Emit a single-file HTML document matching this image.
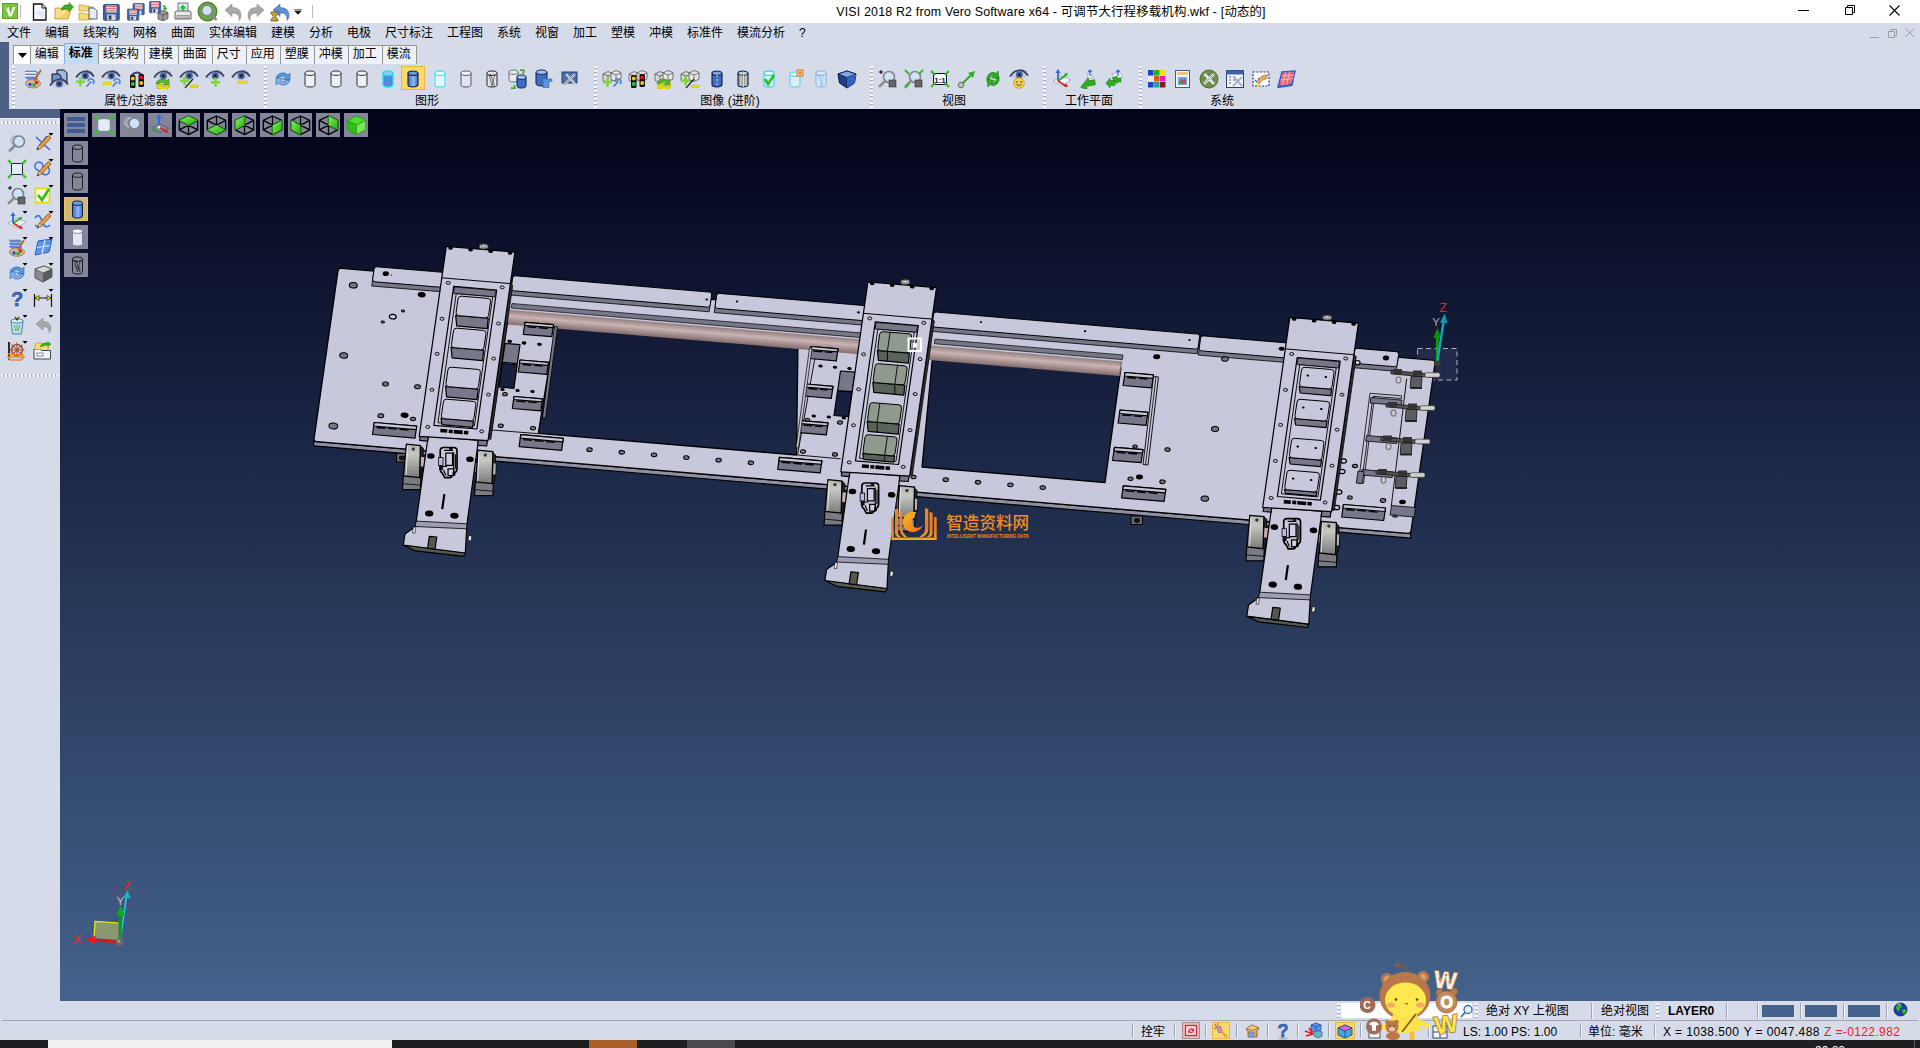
<!DOCTYPE html>
<html lang="zh-CN"><head><meta charset="utf-8"><title>VISI 2018 R2</title>
<style>
html,body{margin:0;padding:0}
body{width:1920px;height:1048px;position:relative;overflow:hidden;background:#d6dbe9;font-family:"Liberation Sans","Noto Sans CJK SC",sans-serif;font-size:12px;color:#000}
.a{position:absolute}
.t{position:absolute;white-space:nowrap;line-height:14px;font-size:12px}
#title{left:0;top:0;width:1920px;height:23px;background:#fff}
.tab{position:absolute;top:45px;height:19px;padding-right:1.5px;border:1px solid #9a978a;border-bottom:none;background:#ecf1fb;box-sizing:border-box;text-align:center;line-height:17px;font-size:12px}
.tab.sel{top:43px;height:21px;background:#c3dcf6;border-color:#8fb0d4;line-height:19px}
.grp{position:absolute;top:94px;height:14px;line-height:14px;font-size:12px;text-align:center;white-space:nowrap}
.sep{position:absolute;top:66px;width:3px;height:42px;background:repeating-linear-gradient(180deg,#f6f7fb 0 2px,#a9aebd 2px 3px,#d6dbe9 3px 4px)}
.vb{position:absolute;width:24px;height:24px;background:rgba(150,152,170,.86)}
.sb{position:absolute;top:1000px;}
</style></head>
<body>
<div class="a" id="title"></div>
<div class="t" style="left:836px;top:5px;width:430px;text-align:center;font-size:12.4px;letter-spacing:.18px">VISI 2018 R2 from Vero Software x64 - 可调节大行程移载机构.wkf - [动态的]</div>
<svg class="a" style="left:2px;top:3px" width="17" height="17" viewBox="0 0 17 17" ><rect width="16" height="16" rx="1" fill="#7cc242"/><rect x=".500" y=".500" width="15" height="15" fill="none" stroke="#5da52c"/><path d="M3.500 4h3l2 7 2.500-7h2.500l-4 9.500h-2.500z" fill="#fff"/><circle cx="5" cy="4.800" r="1" fill="#7cc242"/></svg>
<div class="a" style="left:20px;top:5px;width:1px;height:13px;background:#b9b9b9"></div>
<svg class="a" style="left:32px;top:3px" width="16" height="18" viewBox="0 0 16 18" ><path d="M1.500 1h8.500l4 4v12h-12.500z" fill="#f4f7ff" stroke="#111" stroke-width="1.300"/><path d="M10 1v4h4" fill="#dfe6f7" stroke="#111" stroke-width="1"/><path d="M3 9l9 7v-8z" fill="#d4defa" opacity=".7"/></svg>
<svg class="a" style="left:54px;top:2px" width="20" height="19" viewBox="0 0 20 19" ><path d="M1 17l2-10h14l-3 10z" fill="#f4d26a" stroke="#b98d1c" stroke-width=".8"/><path d="M1 17v-11h5l1.500 1.500h6v2" fill="#f8e08c" stroke="#b98d1c" stroke-width=".8"/><path d="M7 8q2-6 8-5v-2.500l4.500 4.500-4.500 4.500v-2.500q-4-1-8 1z" fill="#35b320" stroke="#1e7a10" stroke-width=".6"/></svg>
<svg class="a" style="left:78px;top:3px" width="20" height="18" viewBox="0 0 20 18" ><path d="M1 2h5l1 1h4v5h-10zM1 10h5l1 1h4v6h-10z" fill="#f6d978" stroke="#c09a30" stroke-width=".7"/><path d="M10 4h5v12h-4" fill="none" stroke="#5fd04a" stroke-width="1"/><path d="M11 5h5l3 3v8h-8z" fill="#e4ecff" stroke="#555" stroke-width=".9"/></svg>
<svg class="a" style="left:103px;top:4px" width="17" height="17" viewBox="0 0 17 17" ><g transform="translate(0.5 0.5) scale(1.05)"><rect x="0" y="0" width="15" height="15" rx="1" fill="#3f62a8" stroke="#22407c" stroke-width=".8"/><rect x="2.500" y="1" width="10" height="6.500" fill="#f2f2f2"/><path d="M2.500 2h10M2.500 4h10M2.500 6h10" stroke="#d85050" stroke-width=".9"/><rect x="3.500" y="9.500" width="8" height="5.500" fill="#cfd4dc"/><rect x="5" y="10.500" width="2.500" height="3.800" fill="#334"/></g></svg>
<svg class="a" style="left:127px;top:3px" width="19" height="18" viewBox="0 0 19 18" ><g transform="translate(6 0.5) scale(0.75)"><rect x="0" y="0" width="15" height="15" rx="1" fill="#3f62a8" stroke="#22407c" stroke-width=".8"/><rect x="2.500" y="1" width="10" height="6.500" fill="#f2f2f2"/><path d="M2.500 2h10M2.500 4h10M2.500 6h10" stroke="#d85050" stroke-width=".9"/><rect x="3.500" y="9.500" width="8" height="5.500" fill="#cfd4dc"/><rect x="5" y="10.500" width="2.500" height="3.800" fill="#334"/></g><g transform="translate(0.5 6) scale(0.75)"><rect x="0" y="0" width="15" height="15" rx="1" fill="#3f62a8" stroke="#22407c" stroke-width=".8"/><rect x="2.500" y="1" width="10" height="6.500" fill="#f2f2f2"/><path d="M2.500 2h10M2.500 4h10M2.500 6h10" stroke="#d85050" stroke-width=".9"/><rect x="3.500" y="9.500" width="8" height="5.500" fill="#cfd4dc"/><rect x="5" y="10.500" width="2.500" height="3.800" fill="#334"/></g></svg>
<svg class="a" style="left:149px;top:1px" width="20" height="20" viewBox="0 0 20 20" ><g transform="translate(0.5 0.5) scale(0.75)"><rect x="0" y="0" width="15" height="15" rx="1" fill="#3f62a8" stroke="#22407c" stroke-width=".8"/><rect x="2.500" y="1" width="10" height="6.500" fill="#f2f2f2"/><path d="M2.500 2h10M2.500 4h10M2.500 6h10" stroke="#d85050" stroke-width=".9"/><rect x="3.500" y="9.500" width="8" height="5.500" fill="#cfd4dc"/><rect x="5" y="10.500" width="2.500" height="3.800" fill="#334"/></g><path d="M14 4q3 0 3 3l1.500-.5-2 3.500-3-2.500 1.500-.3q0-1.500-1.500-1.700z" fill="#35b320"/><path d="M9 12l5-2.500 5 2v6l-5 2.500-5-2z" fill="#9a9a9a" stroke="#444" stroke-width=".7"/><path d="M9 12l5 2 5-2M14 14v6" fill="none" stroke="#444" stroke-width=".7"/></svg>
<svg class="a" style="left:174px;top:2px" width="19" height="19" viewBox="0 0 19 19" ><rect x="4" y="1" width="10" height="9" fill="#d8e8fb" stroke="#555" stroke-width=".8"/><path d="M9 2.500l3.500 4h-2.200v2h-2.600v-2h-2.200z" fill="#2dbb2d"/><path d="M1 11q0-2 2-2h12q2 0 2 2v6h-16z" fill="#e8e8e8" stroke="#555" stroke-width=".9"/><rect x="3" y="13.500" width="12" height="3" fill="#bdbdbd" stroke="#666" stroke-width=".5"/></svg>
<svg class="a" style="left:197px;top:1px" width="22" height="22" viewBox="0 0 22 22" ><circle cx="10.500" cy="10.500" r="9.300" fill="#6ea54a" stroke="#4f8434" stroke-width="1.400"/><circle cx="10" cy="9.5" r="5.3" fill="#cfe2f6" stroke="#7c8590" stroke-width="1.600"/><path d="M13.815999999999999 13.315999999999999l5.034999999999999 5.034999999999999" stroke="#8b8b8b" stroke-width="2.600" stroke-linecap="round"/></svg>
<svg class="a" style="left:223px;top:2px" width="20" height="20" viewBox="0 0 20 20" ><path d="M2 8l7-6v3.500q9 0 9 8q0 3-2 5q1-8-7-7.500v3.500z" fill="#a9a9a9" stroke="#8a8a8a" stroke-width=".6"/></svg>
<svg class="a" style="left:246px;top:2px" width="20" height="20" viewBox="0 0 20 20" ><path d="M18 8l-7-6v3.500q-9 0-9 8q0 3 2 5q-1-8 7-7.500v3.500z" fill="#a9a9a9" stroke="#8a8a8a" stroke-width=".6"/></svg>
<svg class="a" style="left:269px;top:1px" width="21" height="21" viewBox="0 0 21 21" ><path d="M4 9l7-6v3.500q9 0 9 8q0 3-2 5q1-8-7-7.500v3.500z" fill="#5b8fd8" stroke="#3767ae" stroke-width=".6"/><path d="M2 11h7v1.500l-2.500 3 2.500 3v1.500h-7v-1.500l2.500-3-2.500-3z" fill="#c9a24a" stroke="#6b4e12" stroke-width=".8"/></svg>
<svg class="a" style="left:294px;top:9px" width="9" height="6" viewBox="0 0 9 6" ><path d="M0 0h8M1 2.200h6l-3 3z" stroke="#000" stroke-width="1" fill="#000"/></svg>
<div class="a" style="left:312px;top:5px;width:1px;height:13px;background:#b9b9b9"></div>
<svg class="a" style="left:1790px;top:0px" width="130" height="23" viewBox="0 0 130 23" ><path d="M8 10.500h11" stroke="#000" stroke-width="1"/><path d="M55.500 7.500h7v7h-7zM57.500 7.500v-2h7v7h-2" fill="none" stroke="#000" stroke-width="1"/><path d="M99.500 5.500l10 10M109.500 5.500l-10 10" stroke="#000" stroke-width="1.100"/></svg>
<div class="t" style="left:7px;top:26px">文件</div>
<div class="t" style="left:45px;top:26px">编辑</div>
<div class="t" style="left:83px;top:26px">线架构</div>
<div class="t" style="left:133px;top:26px">网格</div>
<div class="t" style="left:171px;top:26px">曲面</div>
<div class="t" style="left:209px;top:26px">实体编辑</div>
<div class="t" style="left:271px;top:26px">建模</div>
<div class="t" style="left:309px;top:26px">分析</div>
<div class="t" style="left:347px;top:26px">电极</div>
<div class="t" style="left:385px;top:26px">尺寸标注</div>
<div class="t" style="left:447px;top:26px">工程图</div>
<div class="t" style="left:497px;top:26px">系统</div>
<div class="t" style="left:535px;top:26px">视窗</div>
<div class="t" style="left:573px;top:26px">加工</div>
<div class="t" style="left:611px;top:26px">塑模</div>
<div class="t" style="left:649px;top:26px">冲模</div>
<div class="t" style="left:687px;top:26px">标准件</div>
<div class="t" style="left:737px;top:26px">模流分析</div>
<div class="t" style="left:799px;top:26px">?</div>
<svg class="a" style="left:1866px;top:26px" width="54" height="14" viewBox="0 0 54 14" ><path d="M4 11.500h9" stroke="#9b9b9b" stroke-width="1"/><path d="M22.500 5.500h6v6h-6zM24.500 5.500v-2h6v6h-2" fill="none" stroke="#9b9b9b" stroke-width="1"/><path d="M39.500 2.500l8.500 8.500M48 2.500l-8.500 8.500" stroke="#9b9b9b" stroke-width="1"/></svg>
<div class="a" style="left:0;top:42px;width:9px;height:67px;background:#4d6183"></div>
<div class="tab" style="left:13px;width:18px;background:#fff"><svg width="9" height="5" style="position:absolute;left:4px;top:7px"><path d="M0 0H9L4.5 5Z" fill="#000"/></svg></div>
<div class="tab" style="left:30px;width:35px">编辑</div>
<div class="tab sel" style="left:64px;width:35px;font-weight:bold">标准</div>
<div class="tab" style="left:98px;width:47px">线架构</div>
<div class="tab" style="left:144px;width:35px">建模</div>
<div class="tab" style="left:178px;width:35px">曲面</div>
<div class="tab" style="left:212px;width:35px">尺寸</div>
<div class="tab" style="left:246px;width:35px">应用</div>
<div class="tab" style="left:280px;width:35px">塑膜</div>
<div class="tab" style="left:314px;width:35px">冲模</div>
<div class="tab" style="left:348px;width:35px">加工</div>
<div class="tab" style="left:382px;width:35px">模流</div>
<div class="a" style="left:9px;top:65px;width:1911px;height:44px;background:#d6dbe9"></div>
<div class="sep" style="left:12px"></div>
<div class="sep" style="left:264px"></div>
<div class="sep" style="left:594px"></div>
<div class="sep" style="left:870px"></div>
<div class="sep" style="left:1043px"></div>
<div class="sep" style="left:1139px"></div>
<div class="grp" style="left:76px;width:120px">属性/过滤器</div>
<div class="grp" style="left:367px;width:120px">图形</div>
<div class="grp" style="left:670px;width:120px">图像 (进阶)</div>
<div class="grp" style="left:894px;width:120px">视图</div>
<div class="grp" style="left:1029px;width:120px">工作平面</div>
<div class="grp" style="left:1162px;width:120px">系统</div>
<svg class="a" style="left:23px;top:69px" width="20" height="20" viewBox="0 0 20 20" ><path d="M2 2h11l2 2h-11zM2 5h11l2 2h-11zM2 8h11l2 2h-11z" fill="#6b8fe0" stroke="#3b5cae" stroke-width=".4"/><rect x="2" y="3" width="11" height="1.300" fill="#e8eefc"/><rect x="2" y="6" width="11" height="1.300" fill="#e8eefc"/><ellipse cx="10" cy="14.500" rx="7.500" ry="4.500" fill="#d9b48c" stroke="#8a6238" stroke-width=".7"/><circle cx="7" cy="15.500" r="1.700" fill="#2050e0"/><circle cx="11" cy="16" r="1.700" fill="#20b030"/><circle cx="13.500" cy="13.500" r="1.700" fill="#e02020"/><path d="M18 1l-7 11" stroke="#b06a28" stroke-width="1.800"/></svg>
<svg class="a" style="left:49px;top:69px" width="20" height="20" viewBox="0 0 20 20" ><path d="M8 1h7l3 3v10h-10z" fill="#9db8ea" stroke="#111" stroke-width="1"/><path d="M3 5h7l2 2v9h-9z" fill="#6f93d8" stroke="#111" stroke-width="1"/><g transform="translate(0 8)"><path d="M1 8.500Q5 2.500 11 2.500Q16 3 19 7.500Q14 11.500 9 11Q4 10.500 1 8.500Z" fill="#c3cbe2"/><path d="M1 8.500Q5 2 11 2.300Q16 2.800 19 7.500" fill="none" stroke="#39425f" stroke-width="1.700"/><circle cx="10.300" cy="6.800" r="3.500" fill="#46639c"/><circle cx="10.300" cy="6.800" r="1.500" fill="#17203a"/><path d="M12 .8l1 1.800M14.500 1.500l.6 1.800M16.700 2.800l.2 1.700" stroke="#39425f" stroke-width=".8"/></g></svg>
<svg class="a" style="left:75px;top:69px" width="20" height="20" viewBox="0 0 20 20" ><path d="M1 8.500Q5 2.500 11 2.500Q16 3 19 7.500Q14 11.500 9 11Q4 10.500 1 8.500Z" fill="#c3cbe2"/><path d="M1 8.500Q5 2 11 2.300Q16 2.800 19 7.500" fill="none" stroke="#39425f" stroke-width="1.700"/><circle cx="10.300" cy="6.800" r="3.500" fill="#46639c"/><circle cx="10.300" cy="6.800" r="1.500" fill="#17203a"/><path d="M12 .8l1 1.800M14.500 1.500l.6 1.800M16.700 2.800l.2 1.700" stroke="#39425f" stroke-width=".8"/><path d="M1 11.5h3.200v-3.200h2.600v3.200h3.200v2.600h-3.200v3.200h-2.600v-3.200h-3.200z" fill="#7fd63d"/><path d="M11.500 17.500l5-5M13 12.500a3 3 0 1 1 5 2.500" fill="none" stroke="#3f7fd6" stroke-width="1.600"/></svg>
<svg class="a" style="left:101px;top:69px" width="20" height="20" viewBox="0 0 20 20" ><path d="M1 8.500Q5 2.500 11 2.500Q16 3 19 7.500Q14 11.500 9 11Q4 10.500 1 8.500Z" fill="#c3cbe2"/><path d="M1 8.500Q5 2 11 2.300Q16 2.800 19 7.500" fill="none" stroke="#39425f" stroke-width="1.700"/><circle cx="10.300" cy="6.800" r="3.500" fill="#46639c"/><circle cx="10.300" cy="6.800" r="1.500" fill="#17203a"/><path d="M12 .8l1 1.800M14.500 1.500l.6 1.800M16.700 2.800l.2 1.700" stroke="#39425f" stroke-width=".8"/><rect x="2" y="13" width="8" height="2.800" fill="#f0e010" stroke="#b0a000" stroke-width=".3"/><path d="M11.500 17.500l5-5M13 12.500a3 3 0 1 1 5 2.500" fill="none" stroke="#3f7fd6" stroke-width="1.600"/></svg>
<svg class="a" style="left:127px;top:69px" width="20" height="20" viewBox="0 0 20 20" ><path d="M4 7q6-7 12 0" fill="none" stroke="#39425f" stroke-width="2"/><rect x="3" y="6" width="5.500" height="13" rx="1.500" fill="#111"/><rect x="11.500" y="5" width="5.500" height="13" rx="1.500" fill="#111"/><circle cx="5.750" cy="9.500" r="2" fill="#f4c210"/><circle cx="5.750" cy="15" r="2" fill="#22d022"/><circle cx="14.250" cy="8.500" r="2" fill="#e81010"/><circle cx="14.250" cy="14" r="2" fill="#f4c210"/></svg>
<svg class="a" style="left:153px;top:69px" width="20" height="20" viewBox="0 0 20 20" ><path d="M1 8.500Q5 2.500 11 2.500Q16 3 19 7.500Q14 11.500 9 11Q4 10.500 1 8.500Z" fill="#c3cbe2"/><path d="M1 8.500Q5 2 11 2.300Q16 2.800 19 7.500" fill="none" stroke="#39425f" stroke-width="1.700"/><circle cx="10.300" cy="6.800" r="3.500" fill="#46639c"/><circle cx="10.300" cy="6.800" r="1.500" fill="#17203a"/><path d="M12 .8l1 1.800M14.500 1.500l.6 1.800M16.700 2.800l.2 1.700" stroke="#39425f" stroke-width=".8"/><g transform="translate(0 3)"><path d="M3 12a6.500 5 0 0 1 11-3.500l2-1.500v6h-6l2-2a4 3 0 0 0-6 1z" fill="#58b52c" stroke="#2f7d12" stroke-width=".5"/><path d="M17 13a6.500 5 0 0 1-11 3.500l-2 1.500v-6h6l-2 2a4 3 0 0 0 6-1z" fill="#e8d810" stroke="#a09000" stroke-width=".5"/></g></svg>
<svg class="a" style="left:179px;top:69px" width="20" height="20" viewBox="0 0 20 20" ><path d="M1 8.500Q5 2.500 11 2.500Q16 3 19 7.500Q14 11.500 9 11Q4 10.500 1 8.500Z" fill="#c3cbe2"/><path d="M1 8.500Q5 2 11 2.300Q16 2.800 19 7.500" fill="none" stroke="#39425f" stroke-width="1.700"/><circle cx="10.300" cy="6.800" r="3.500" fill="#46639c"/><circle cx="10.300" cy="6.800" r="1.500" fill="#17203a"/><path d="M12 .8l1 1.800M14.500 1.500l.6 1.800M16.700 2.800l.2 1.700" stroke="#39425f" stroke-width=".8"/><path d="M1 10.5h3.200v-3.200h2.600v3.200h3.200v2.600h-3.200v3.200h-2.600v-3.200h-3.200z" fill="#7fd63d"/><path d="M6 19l8-9" stroke="#222" stroke-width="1.200"/><rect x="11" y="16" width="8" height="2.800" fill="#f0e010" stroke="#b0a000" stroke-width=".3"/></svg>
<svg class="a" style="left:205px;top:69px" width="20" height="20" viewBox="0 0 20 20" ><path d="M1 8.500Q5 2.500 11 2.500Q16 3 19 7.500Q14 11.500 9 11Q4 10.500 1 8.500Z" fill="#c3cbe2"/><path d="M1 8.500Q5 2 11 2.300Q16 2.800 19 7.500" fill="none" stroke="#39425f" stroke-width="1.700"/><circle cx="10.300" cy="6.800" r="3.500" fill="#46639c"/><circle cx="10.300" cy="6.800" r="1.500" fill="#17203a"/><path d="M12 .8l1 1.800M14.500 1.500l.6 1.800M16.700 2.800l.2 1.700" stroke="#39425f" stroke-width=".8"/><path d="M6 12h3.200v-3.200h2.600v3.200h3.200v2.600h-3.200v3.200h-2.600v-3.200h-3.200z" fill="#7fd63d"/></svg>
<svg class="a" style="left:231px;top:69px" width="20" height="20" viewBox="0 0 20 20" ><path d="M1 8.500Q5 2.500 11 2.500Q16 3 19 7.500Q14 11.500 9 11Q4 10.500 1 8.500Z" fill="#c3cbe2"/><path d="M1 8.500Q5 2 11 2.300Q16 2.800 19 7.500" fill="none" stroke="#39425f" stroke-width="1.700"/><circle cx="10.300" cy="6.800" r="3.500" fill="#46639c"/><circle cx="10.300" cy="6.800" r="1.500" fill="#17203a"/><path d="M12 .8l1 1.800M14.500 1.500l.6 1.800M16.700 2.800l.2 1.700" stroke="#39425f" stroke-width=".8"/><rect x="7" y="12" width="9" height="2.800" fill="#f0e010" stroke="#b0a000" stroke-width=".3"/></svg>
<svg class="a" style="left:273px;top:69px" width="20" height="20" viewBox="0 0 20 20" ><path d="M3 9a7 6.500 0 0 1 12-3l2-2v7h-7l2.500-2.500a4 4 0 0 0-6.500 .5z" fill="#5c96dc" stroke="#2c62a8" stroke-width=".6"/><path d="M17 11a7 6.500 0 0 1-12 3l-2 2v-7h7l-2.500 2.500a4 4 0 0 0 6.500-.5z" fill="#7fb2ea" stroke="#2c62a8" stroke-width=".6"/></svg>
<svg class="a" style="left:300px;top:69px" width="20" height="20" viewBox="0 0 20 20" ><g opacity="1"><path d="M5 4.2v11.6a5.0 2.2 0 0 0 10 0v-11.6" fill="#eef0f6" stroke="#333" stroke-width="1"/><ellipse cx="10.0" cy="4.2" rx="5.0" ry="2.2" fill="#eef0f6" stroke="#333" stroke-width="1"/></g></svg>
<svg class="a" style="left:326px;top:69px" width="20" height="20" viewBox="0 0 20 20" ><g opacity="1"><path d="M5 4.2v11.6a5.0 2.2 0 0 0 10 0v-11.6" fill="#eef0f6" stroke="#333" stroke-width="1"/><ellipse cx="10.0" cy="4.2" rx="5.0" ry="2.2" fill="#eef0f6" stroke="#333" stroke-width="1"/></g></svg>
<svg class="a" style="left:352px;top:69px" width="20" height="20" viewBox="0 0 20 20" ><g opacity="1"><path d="M5 4.2v11.6a5.0 2.2 0 0 0 10 0v-11.6" fill="#eef0f6" stroke="#333" stroke-width="1"/><ellipse cx="10.0" cy="4.2" rx="5.0" ry="2.2" fill="#eef0f6" stroke="#333" stroke-width="1"/></g></svg>
<svg class="a" style="left:378px;top:69px" width="20" height="20" viewBox="0 0 20 20" ><g opacity="1"><path d="M5 4.2v11.6a5.0 2.2 0 0 0 10 0v-11.6" fill="#4f8be0" stroke="#22e0f0" stroke-width="1.3"/><ellipse cx="10.0" cy="4.2" rx="5.0" ry="2.2" fill="#9cc4f4" stroke="#22e0f0" stroke-width="1.3"/></g></svg>
<div class="a" style="left:401px;top:66px;width:24px;height:24px;background:#fbd96a;border:1px solid #e6b93c;box-sizing:border-box"></div>
<svg class="a" style="left:403px;top:69px" width="20" height="20" viewBox="0 0 20 20" ><defs><linearGradient id="cb" x1="0" x2="1" y1="0" y2="0"><stop offset="0" stop-color="#3a68c0"/><stop offset=".55" stop-color="#8fb8f0"/><stop offset="1" stop-color="#3a68c0"/></linearGradient></defs><g opacity="1"><path d="M5 4.2v11.6a5.0 2.2 0 0 0 10 0v-11.6" fill="url(#cb)" stroke="#0e1e50" stroke-width="1.1"/><ellipse cx="10.0" cy="4.2" rx="5.0" ry="2.2" fill="#6f9be0" stroke="#0e1e50" stroke-width="1.1"/></g></svg>
<svg class="a" style="left:430px;top:69px" width="20" height="20" viewBox="0 0 20 20" ><g opacity="1"><path d="M5 4.2v11.6a5.0 2.2 0 0 0 10 0v-11.6" fill="#e8f4fb" stroke="#5ae0f0" stroke-width="1.3"/><ellipse cx="10.0" cy="4.2" rx="5.0" ry="2.2" fill="#f4fbff" stroke="#5ae0f0" stroke-width="1.3"/></g></svg>
<svg class="a" style="left:456px;top:69px" width="20" height="20" viewBox="0 0 20 20" ><g opacity="1"><path d="M5 4.2v11.6a5.0 2.2 0 0 0 10 0v-11.6" fill="#dfe6f2" stroke="#556" stroke-width="1"/><ellipse cx="10.0" cy="4.2" rx="5.0" ry="2.2" fill="#f4f7fc" stroke="#556" stroke-width="1"/></g></svg>
<svg class="a" style="left:482px;top:69px" width="20" height="20" viewBox="0 0 20 20" ><g opacity="1"><path d="M5 4.2v11.6a5.0 2.2 0 0 0 10 0v-11.6" fill="#e4e4e8" stroke="#222" stroke-width="1"/><ellipse cx="10.0" cy="4.2" rx="5.0" ry="2.2" fill="#e4e4e8" stroke="#222" stroke-width="1"/></g><path d="M7 5l3 12M13 5l-3 12M8.500 5l4 12" stroke="#222" stroke-width=".6" fill="none"/></svg>
<svg class="a" style="left:508px;top:69px" width="20" height="20" viewBox="0 0 20 20" ><g opacity="1"><path d="M1 3.2v7.6a4.5 2.2 0 0 0 9 0v-7.6" fill="#e4e8f0" stroke="#555" stroke-width="0.8"/><ellipse cx="5.5" cy="3.2" rx="4.5" ry="2.2" fill="#e4e8f0" stroke="#555" stroke-width="0.8"/></g><g opacity="1"><path d="M9 8.2v8.6a4.5 2.2 0 0 0 9 0v-8.6" fill="#3f6fc0" stroke="#0e1e50" stroke-width="1"/><ellipse cx="13.5" cy="8.2" rx="4.5" ry="2.2" fill="#9cc4f4" stroke="#0e1e50" stroke-width="1"/></g><path d="M12 1l4 .500-1 3.500M3 19l4 .500-1-3.500" stroke="#2faa22" stroke-width="1.500" fill="none"/></svg>
<svg class="a" style="left:534px;top:69px" width="20" height="20" viewBox="0 0 20 20" ><g opacity="1"><path d="M2 3.2v11.6a5.5 2.2 0 0 0 11 0v-11.6" fill="#3f6fc0" stroke="#0e1e50" stroke-width="1"/><ellipse cx="7.5" cy="3.2" rx="5.5" ry="2.2" fill="#9cc4f4" stroke="#0e1e50" stroke-width="1"/></g><path d="M9 10h9v2.500h-3v6h-6z" fill="#5c96dc" stroke="#2c62a8" stroke-width=".6"/></svg>
<svg class="a" style="left:560px;top:69px" width="20" height="20" viewBox="0 0 20 20" ><rect x="2" y="3" width="15" height="11" fill="#4d6fa8" stroke="#26427a" stroke-width="1"/><path d="M4 16l11-11M6 5l10 11" stroke="#c8ccd4" stroke-width="2.400"/><path d="M4 16l11-11" stroke="#8a8f99" stroke-width=".8"/></svg>
<svg class="a" style="left:602px;top:69px" width="20" height="20" viewBox="0 0 20 20" ><path d="M1 5l5-2.500 5 2v6.500l-5 2.500-5-2z" fill="#d8d8d8" stroke="#555" stroke-width=".8"/><path d="M1 5l5 2 5-2M6 7v6.500" fill="none" stroke="#555" stroke-width=".8"/><path d="M9 4l5-2.500 5 2v6.500l-5 2.500-5-2z" fill="#e6e6e6" stroke="#555" stroke-width=".8"/><path d="M9 4l5 2 5-2M14 6v6.500" fill="none" stroke="#555" stroke-width=".8"/><path d="M1 12h3.200v-3.200h2.600v3.200h3.200v2.600h-3.200v3.200h-2.600v-3.200h-3.200z" fill="#7fd63d"/><path d="M11.500 17.500l5-5M13 12.500a3 3 0 1 1 5 2.500" fill="none" stroke="#3f7fd6" stroke-width="1.600"/></svg>
<svg class="a" style="left:628px;top:69px" width="20" height="20" viewBox="0 0 20 20" ><g opacity=".9"><path d="M1 5l5-2.500 5 2v6.500l-5 2.500-5-2z" fill="#d8d8d8" stroke="#555" stroke-width=".8"/><path d="M1 5l5 2 5-2M6 7v6.500" fill="none" stroke="#555" stroke-width=".8"/><path d="M9 4l5-2.500 5 2v6.500l-5 2.500-5-2z" fill="#e6e6e6" stroke="#555" stroke-width=".8"/><path d="M9 4l5 2 5-2M14 6v6.500" fill="none" stroke="#555" stroke-width=".8"/></g><rect x="3" y="6" width="5.500" height="13" rx="1.500" fill="#111"/><rect x="11.500" y="5" width="5.500" height="13" rx="1.500" fill="#111"/><circle cx="5.750" cy="9.500" r="2" fill="#f4c210"/><circle cx="5.750" cy="15" r="2" fill="#22d022"/><circle cx="14.250" cy="8.500" r="2" fill="#e81010"/><circle cx="14.250" cy="14" r="2" fill="#f4c210"/></svg>
<svg class="a" style="left:654px;top:69px" width="20" height="20" viewBox="0 0 20 20" ><path d="M1 5l5-2.500 5 2v6.500l-5 2.500-5-2z" fill="#d8d8d8" stroke="#555" stroke-width=".8"/><path d="M1 5l5 2 5-2M6 7v6.500" fill="none" stroke="#555" stroke-width=".8"/><path d="M9 4l5-2.500 5 2v6.500l-5 2.500-5-2z" fill="#e6e6e6" stroke="#555" stroke-width=".8"/><path d="M9 4l5 2 5-2M14 6v6.500" fill="none" stroke="#555" stroke-width=".8"/><g transform="translate(0 3)"><path d="M3 12a6.500 5 0 0 1 11-3.500l2-1.500v6h-6l2-2a4 3 0 0 0-6 1z" fill="#58b52c" stroke="#2f7d12" stroke-width=".5"/><path d="M17 13a6.500 5 0 0 1-11 3.500l-2 1.500v-6h6l-2 2a4 3 0 0 0 6-1z" fill="#e8d810" stroke="#a09000" stroke-width=".5"/></g></svg>
<svg class="a" style="left:680px;top:69px" width="20" height="20" viewBox="0 0 20 20" ><path d="M1 5l5-2.500 5 2v6.500l-5 2.500-5-2z" fill="#d8d8d8" stroke="#555" stroke-width=".8"/><path d="M1 5l5 2 5-2M6 7v6.500" fill="none" stroke="#555" stroke-width=".8"/><path d="M9 4l5-2.500 5 2v6.500l-5 2.500-5-2z" fill="#e6e6e6" stroke="#555" stroke-width=".8"/><path d="M9 4l5 2 5-2M14 6v6.500" fill="none" stroke="#555" stroke-width=".8"/><path d="M1 10.5h3.200v-3.200h2.600v3.200h3.200v2.600h-3.200v3.200h-2.600v-3.200h-3.200z" fill="#7fd63d"/><path d="M6 19l8-9" stroke="#222" stroke-width="1.200"/><rect x="11" y="16" width="8" height="2.800" fill="#f0e010" stroke="#b0a000" stroke-width=".3"/></svg>
<svg class="a" style="left:707px;top:69px" width="20" height="20" viewBox="0 0 20 20" ><g opacity="1"><path d="M5 4.2v11.6a5.0 2.2 0 0 0 10 0v-11.6" fill="#3f6fc0" stroke="#0e1e50" stroke-width="1.1"/><ellipse cx="10.0" cy="4.2" rx="5.0" ry="2.2" fill="#7fa6e8" stroke="#0e1e50" stroke-width="1.1"/></g><path d="M10 6v11" stroke="#dfe8ff" stroke-width="1" stroke-dasharray="2 2"/></svg>
<svg class="a" style="left:733px;top:69px" width="20" height="20" viewBox="0 0 20 20" ><g opacity="1"><path d="M5 4.2v11.6a5.0 2.2 0 0 0 10 0v-11.6" fill="#9aa0b0" stroke="#0e1e50" stroke-width="1.1"/><ellipse cx="10.0" cy="4.2" rx="5.0" ry="2.2" fill="#c9ccd8" stroke="#0e1e50" stroke-width="1.1"/></g><path d="M8 6v11M10.500 6v12M13 6v11" stroke="#f0e878" stroke-width="1"/></svg>
<svg class="a" style="left:759px;top:69px" width="20" height="20" viewBox="0 0 20 20" ><g opacity="1"><path d="M5 4.2v11.6a5.0 2.2 0 0 0 10 0v-11.6" fill="#dff4fb" stroke="#3fd8ee" stroke-width="1.3"/><ellipse cx="10.0" cy="4.2" rx="5.0" ry="2.2" fill="#f4fbff" stroke="#3fd8ee" stroke-width="1.3"/></g><path d="M6 10l3 5 6-9" fill="none" stroke="#2fbb22" stroke-width="2.600"/></svg>
<svg class="a" style="left:785px;top:69px" width="20" height="20" viewBox="0 0 20 20" ><g opacity="1"><path d="M5 5.2v10.6a5.0 2.2 0 0 0 10 0v-10.6" fill="#dff0fb" stroke="#5ad8ee" stroke-width="1.2"/><ellipse cx="10.0" cy="5.2" rx="5.0" ry="2.2" fill="#f4fbff" stroke="#5ad8ee" stroke-width="1.2"/></g><rect x="12" y="1" width="6" height="6" fill="#f6c27a" stroke="#d07a20" stroke-width="1"/><rect x="14" y="3" width="2" height="2" fill="#d07a20"/></svg>
<svg class="a" style="left:811px;top:69px" width="20" height="20" viewBox="0 0 20 20" ><g opacity="1"><path d="M5 4.2v11.6a5.0 2.2 0 0 0 10 0v-11.6" fill="#dbe8fa" stroke="#7fb0ec" stroke-width="1"/><ellipse cx="10.0" cy="4.2" rx="5.0" ry="2.2" fill="#dbe8fa" stroke="#7fb0ec" stroke-width="1"/></g><path d="M7 5l3 12M13 5l-3 12M8.500 5l4 12" stroke="#7fb0ec" stroke-width=".6" fill="none"/></svg>
<svg class="a" style="left:837px;top:69px" width="20" height="20" viewBox="0 0 20 20" ><path d="M1 5l9-3 9 3-1.500 9-7.500 5-7.500-5z" fill="#1f3f88" stroke="#0a1840" stroke-width="1"/><path d="M1 5l9 3.500 9-3.500-9-3z" fill="#7fa8ea" stroke="#0a1840" stroke-width=".8"/><path d="M10 8.500v10.500" stroke="#0a1840" stroke-width=".8"/><path d="M10 8.500l9-3.500-1.500 9-7.500 5z" fill="#3563c0"/></svg>
<svg class="a" style="left:878px;top:69px" width="20" height="20" viewBox="0 0 20 20" ><circle cx="11" cy="8" r="5.5" fill="#cfe2f6" stroke="#7c8590" stroke-width="1.600"/><path d="M7.04 11.96l-5.225 5.225" stroke="#8b8b8b" stroke-width="2.600" stroke-linecap="round"/><rect x="11" y="11" width="7" height="7" fill="#666" stroke="#333" stroke-width=".6"/><path d="M1 3h4M3 1v4" stroke="#000" stroke-width="1"/></svg>
<svg class="a" style="left:904px;top:69px" width="20" height="20" viewBox="0 0 20 20" ><circle cx="11" cy="8" r="5.5" fill="#cfe2f6" stroke="#7c8590" stroke-width="1.600"/><path d="M7.04 11.96l-5.225 5.225" stroke="#8b8b8b" stroke-width="2.600" stroke-linecap="round"/><rect x="11" y="11" width="7" height="7" fill="#666" stroke="#333" stroke-width=".6"/><path d="M1 1l4 4M19 1l-4 4M1 19l4-4" stroke="#2fbb22" stroke-width="1.800"/></svg>
<svg class="a" style="left:930px;top:69px" width="20" height="20" viewBox="0 0 20 20" ><rect x="3.500" y="4.500" width="13" height="11" fill="#f4f6fb" stroke="#111" stroke-width="1"/><text x="10" y="13.500" font-size="8" font-weight="bold" text-anchor="middle" font-family="Liberation Sans, sans-serif" fill="#223">1:1</text><path d="M1 2l4 4M19 2l-4 4M1 18l4-4M19 18l-4-4" stroke="#2fbb22" stroke-width="2"/></svg>
<svg class="a" style="left:957px;top:69px" width="20" height="20" viewBox="0 0 20 20" ><path d="M4 16l11-11" stroke="#2fae22" stroke-width="2.200"/><path d="M18 2l-2 7-5-5z" fill="#2fae22"/><circle cx="4" cy="16" r="2.800" fill="#c0c0c0" stroke="#555" stroke-width=".8"/></svg>
<svg class="a" style="left:983px;top:69px" width="20" height="20" viewBox="0 0 20 20" ><path d="M4 12a6 7 0 0 1 9-7.500l2-2.500 1 8-7.500-1.500 2.500-2a3.500 4.500 0 0 0-4.500 5z" fill="#2fae22" stroke="#167a0e" stroke-width=".6"/><path d="M16 8a6 7 0 0 1-9 7.500l-2 2.500-1-8 7.500 1.500-2.500 2a3.500 4.500 0 0 0 4.500-5z" fill="#2fae22" stroke="#167a0e" stroke-width=".6"/></svg>
<svg class="a" style="left:1009px;top:69px" width="20" height="20" viewBox="0 0 20 20" ><g transform="translate(0 -1)"><path d="M1 8.500Q5 2.500 11 2.500Q16 3 19 7.500Q14 11.500 9 11Q4 10.500 1 8.500Z" fill="#c3cbe2"/><path d="M1 8.500Q5 2 11 2.300Q16 2.800 19 7.500" fill="none" stroke="#39425f" stroke-width="1.700"/><circle cx="10.300" cy="6.800" r="3.500" fill="#46639c"/><circle cx="10.300" cy="6.800" r="1.500" fill="#17203a"/><path d="M12 .8l1 1.800M14.500 1.500l.6 1.800M16.700 2.800l.2 1.700" stroke="#39425f" stroke-width=".8"/></g><circle cx="10" cy="14" r="5.300" fill="#f6d04a" stroke="#b98a10" stroke-width=".7"/><circle cx="8" cy="13" r=".8" fill="#333"/><circle cx="12" cy="13" r=".8" fill="#333"/><path d="M7.500 15.500q2.500 2 5 0" fill="none" stroke="#333" stroke-width=".8"/></svg>
<svg class="a" style="left:1052px;top:69px" width="20" height="20" viewBox="0 0 20 20" ><path d="M1 12l9-5 9 4-9 6z" fill="#eef0f8" stroke="#99a" stroke-width=".7"/><path d="M6 12v-9" stroke="#2a6ae0" stroke-width="1.800"/><path d="M6 0l-2.500 4h5z" fill="#2a6ae0"/><path d="M6 12l8-6" stroke="#22b022" stroke-width="1.600"/><path d="M6 12l8 5" stroke="#e02020" stroke-width="1.600"/><path d="M16 4l-4 .500 2.500 3zM16 18l-4-.500 2-3z" fill="#22b022"/><path d="M16 18l-4-.500 2-3z" fill="#e02020"/></svg>
<svg class="a" style="left:1078px;top:69px" width="20" height="20" viewBox="0 0 20 20" ><path d="M9 4l7 4-6 2z" fill="#eef0f8" stroke="#99a" stroke-width=".6"/><path d="M12 1v6M10 3l2-2 2 2" stroke="#2a6ae0" stroke-width="1.100" fill="none"/><path d="M2 17l9-8v3h6v5h-9v3z" fill="#2fae22" stroke="#167a0e" stroke-width=".6" transform="rotate(-10 10 14)"/></svg>
<svg class="a" style="left:1104px;top:69px" width="20" height="20" viewBox="0 0 20 20" ><path d="M8 5l8-2 3 5-8 3z" fill="#eef0f8" stroke="#99a" stroke-width=".6"/><path d="M14 1v6M12 3l2-2 2 2" stroke="#2a6ae0" stroke-width="1.100" fill="none"/><path d="M2 14l4-5v2.500h5v5h-5v2.500zM8 9l5-2v2h4v4h-4v2z" fill="#2fae22" stroke="#167a0e" stroke-width=".5"/></svg>
<svg class="a" style="left:1147px;top:69px" width="20" height="20" viewBox="0 0 20 20" ><rect x="1" y="1" width="5.500" height="5.500" fill="#2040d0"/><rect x="7" y="1" width="5.500" height="5.500" fill="#20b020"/><rect x="13" y="1" width="5.500" height="5.500" fill="#f0e010"/><rect x="1" y="7" width="5.500" height="5.500" fill="#e8e8e8"/><rect x="7" y="7" width="5.500" height="5.500" fill="#d06010"/><rect x="13" y="7" width="5.500" height="5.500" fill="#e020c0"/><rect x="1" y="13" width="5.500" height="5.500" fill="#2040d0"/><rect x="7" y="13" width="5.500" height="5.500" fill="#20a0a0"/><rect x="13" y="13" width="5.500" height="5.500" fill="#802020"/></svg>
<svg class="a" style="left:1173px;top:69px" width="20" height="20" viewBox="0 0 20 20" ><rect x="2.500" y="1.500" width="14" height="17" fill="#f0f4fb" stroke="#3b5c9e" stroke-width="1"/><rect x="4" y="3" width="11" height="3" fill="#f6c27a"/><rect x="5" y="8" width="9" height="8" fill="#6fa6e8"/><path d="M6 14h2v-3h2v3h2v-4" stroke="#e02020" stroke-width="1.200" fill="none"/><rect x="6" y="12" width="3" height="3" fill="#28b028"/></svg>
<svg class="a" style="left:1199px;top:69px" width="20" height="20" viewBox="0 0 20 20" ><circle cx="10" cy="10" r="9" fill="#6e8e4a" stroke="#4c6a30" stroke-width="1"/><path d="M5 15l10-10M5.500 5l9.500 10" stroke="#dfe4ea" stroke-width="2.600"/><path d="M5 15l10-10" stroke="#7f8790" stroke-width=".7"/></svg>
<svg class="a" style="left:1225px;top:69px" width="20" height="20" viewBox="0 0 20 20" ><rect x="1.500" y="1.500" width="17" height="17" fill="#f4f6fb" stroke="#26427a" stroke-width="1"/><rect x="1.500" y="1.500" width="17" height="4" fill="#3f62a8"/><path d="M4 8h2M4 11h2M4 14h2M8 8h2M8 11h2" stroke="#555" stroke-width="1.200"/><path d="M8 17l9-9M9 8l8 9" stroke="#9fb4d8" stroke-width="2"/></svg>
<svg class="a" style="left:1251px;top:69px" width="20" height="20" viewBox="0 0 20 20" ><rect x="2" y="3" width="16" height="14" fill="#fafafa" stroke="#223a7a" stroke-width="1.200" stroke-dasharray="2 1.500"/><path d="M6 13q4-8 11-7l-2 4q-4 0-7 5z" fill="#e8a858" stroke="#a0621c" stroke-width=".6"/><path d="M4 11l2 2M7 9l1.500 1.500" stroke="#2a6ae0" stroke-width="1.200"/><path d="M5 15l2 1 1 2" stroke="#f0e010" stroke-width="1.200" fill="none"/></svg>
<svg class="a" style="left:1277px;top:69px" width="20" height="20" viewBox="0 0 20 20" ><path d="M5 3l13-1-3 14-14 2z" fill="#e46a78" stroke="#2a5ad0" stroke-width="1.400"/><path d="M4.500 7l13-1M3.500 11l13-1.500M8.500 3l-3 14M12.500 2.500l-3 14" stroke="#f6c6cc" stroke-width=".8"/><path d="M1 18l14-2" stroke="#2a5ad0" stroke-width="2"/></svg>
<div class="a" style="left:0;top:109px;width:60px;height:9px;background:#4d6183"></div>
<div class="a" style="left:0;top:118px;width:60px;height:882px;background:#d6dbe9"></div>
<div class="a" style="left:0;top:118px;width:60px;height:1px;background:#eef1f8"></div>
<div class="a" style="left:1px;top:121px;width:58px;height:3px;background:repeating-linear-gradient(90deg,#f6f7fb 0 2px,#a9aebd 2px 3px,#d6dbe9 3px 4px)"></div>
<div class="a" style="left:1px;top:374px;width:58px;height:3px;background:repeating-linear-gradient(90deg,#f6f7fb 0 2px,#a9aebd 2px 3px,#d6dbe9 3px 4px)"></div>
<svg class="a" style="left:7px;top:133px" width="21" height="20" viewBox="0 0 21 20" ><circle cx="8" cy="7.500" r="4.500" fill="none" stroke="#aab2c4" stroke-width="1"/><circle cx="10" cy="8" r="5" fill="none" stroke="#9aa2b6" stroke-width="1"/><circle cx="12" cy="8.5" r="5.5" fill="#cfe2f6" stroke="#7c8590" stroke-width="1.600"/><path d="M8.04 12.46l-5.225 5.225" stroke="#8b8b8b" stroke-width="2.600" stroke-linecap="round"/></svg>
<svg class="a" style="left:7px;top:159px" width="21" height="20" viewBox="0 0 21 20" ><rect x="4.500" y="4.500" width="11" height="11" fill="#e4ecfb" stroke="#223" stroke-width="1"/><path d="M1 1l4 4M19 1l-4 4M1 19l4-4M19 19l-4-4" stroke="#2fbb22" stroke-width="2"/></svg>
<svg class="a" style="left:7px;top:185px" width="21" height="20" viewBox="0 0 21 20" ><circle cx="11" cy="9" r="5.5" fill="#cfe2f6" stroke="#7c8590" stroke-width="1.600"/><path d="M7.04 12.96l-5.225 5.225" stroke="#8b8b8b" stroke-width="2.600" stroke-linecap="round"/><rect x="11" y="12" width="7" height="7" fill="#666" stroke="#333" stroke-width=".6"/><path d="M1 3h4M3 1v4" stroke="#000" stroke-width="1"/><path d="M15.500 0h5l-2.500 2.800z" fill="#000"/></svg>
<svg class="a" style="left:7px;top:211px" width="21" height="20" viewBox="0 0 21 20" ><path d="M1 12l9-5 9 4-9 6z" fill="#eef0f8" stroke="#99a" stroke-width=".7"/><path d="M6 12v-8" stroke="#2a6ae0" stroke-width="1.800"/><path d="M6 1l-2.500 4h5z" fill="#2a6ae0"/><path d="M6 12l8-5" stroke="#22b022" stroke-width="1.600"/><path d="M6 12l8 5" stroke="#e02020" stroke-width="1.600"/><path d="M15.500 6l-4 .500 2 3z" fill="#22b022"/><path d="M16 18l-4-.500 2-3z" fill="#e02020"/><path d="M15.500 0h5l-2.500 2.800z" fill="#000"/></svg>
<svg class="a" style="left:7px;top:237px" width="21" height="20" viewBox="0 0 21 20" ><path d="M2 3h11l2 2h-11zM2 6h11l2 2h-11zM2 9h11l2 2h-11z" fill="#6b8fe0" stroke="#3b5cae" stroke-width=".4"/><ellipse cx="10" cy="15" rx="7.500" ry="4.300" fill="#d9b48c" stroke="#8a6238" stroke-width=".7"/><circle cx="7" cy="16" r="1.700" fill="#2050e0"/><circle cx="11" cy="16.500" r="1.700" fill="#20b030"/><circle cx="13.500" cy="14" r="1.700" fill="#e02020"/><path d="M17 3l-6 10" stroke="#b06a28" stroke-width="1.800"/><path d="M15.500 0h5l-2.500 2.800z" fill="#000"/></svg>
<svg class="a" style="left:7px;top:263px" width="21" height="20" viewBox="0 0 21 20" ><path d="M3 9a7 6.500 0 0 1 12-3l2-2v7h-7l2.500-2.500a4 4 0 0 0-6.500 .5z" fill="#5c96dc" stroke="#2c62a8" stroke-width=".6"/><path d="M17 11a7 6.500 0 0 1-12 3l-2 2v-7h7l-2.500 2.500a4 4 0 0 0 6.500-.5z" fill="#7fb2ea" stroke="#2c62a8" stroke-width=".6"/><path d="M15.500 0h5l-2.500 2.800z" fill="#000"/></svg>
<svg class="a" style="left:7px;top:289px" width="21" height="20" viewBox="0 0 21 20" ><text x="10" y="17" font-size="20" font-weight="bold" text-anchor="middle" font-family="Liberation Sans, sans-serif" fill="#3a6fd0" stroke="#1d3f8a" stroke-width=".5">?</text><path d="M15.500 0h5l-2.500 2.800z" fill="#000"/></svg>
<svg class="a" style="left:7px;top:315px" width="21" height="20" viewBox="0 0 21 20" ><path d="M4 6h12l-1.500 13h-9z" fill="#b8dcf0" stroke="#4a7a9a" stroke-width=".9"/><ellipse cx="10" cy="6" rx="6.300" ry="2" fill="#d8ecf8" stroke="#4a7a9a" stroke-width=".9"/><path d="M8 2l2 3 2-3" stroke="#222" stroke-width="1.200" fill="#f0d020"/><path d="M7.500 10l1 6M12.500 10l-1 6M10 10v6" stroke="#6ab04a" stroke-width="1"/><path d="M15.500 0h5l-2.500 2.800z" fill="#000"/></svg>
<svg class="a" style="left:7px;top:341px" width="21" height="20" viewBox="0 0 21 20" ><path d="M2 1v18" stroke="#2a2a2a" stroke-width="2"/><circle cx="10" cy="9" r="5.500" fill="none" stroke="#a0522d" stroke-width="1.600"/><path d="M10 1.500v15M2.500 9h15M4.700 3.700l10.600 10.600M15.300 3.700l-10.600 10.600" stroke="#a0522d" stroke-width="1.100"/><path d="M1 16h16l-3 3h-11zM1 13l16 1" stroke="#f08a1c" stroke-width="1.600" fill="none"/><path d="M15.500 0h5l-2.500 2.800z" fill="#000"/></svg>
<svg class="a" style="left:33px;top:133px" width="21" height="20" viewBox="0 0 21 20" ><path d="M3 4l14 13M4 16l10-13" stroke="#3f6fd6" stroke-width="1.600"/><path d="M4 17l2.500-5 9-9.500 2.500 2.500-9 9.500z" fill="#e8a040" stroke="#7a4a10" stroke-width=".8"/><path d="M4 17l2.500-5 2.500 2.500z" fill="#f4dcb0" stroke="#7a4a10" stroke-width=".6"/><path d="M4 17l1-2 1 1z" fill="#222"/><path d="M15.500 0h5l-2.500 2.800z" fill="#000"/></svg>
<svg class="a" style="left:33px;top:159px" width="21" height="20" viewBox="0 0 21 20" ><path d="M9 10a4 4 0 1 0-4 4h8a4 4 0 1 0-4-4" fill="none" stroke="#3f6fd6" stroke-width="1.600" transform="rotate(35 10 10)"/><path d="M4 17l2.500-5 9-9.500 2.500 2.500-9 9.500z" fill="#e8a040" stroke="#7a4a10" stroke-width=".8"/><path d="M4 17l2.500-5 2.500 2.500z" fill="#f4dcb0" stroke="#7a4a10" stroke-width=".6"/><path d="M4 17l1-2 1 1z" fill="#222"/><path d="M15.500 0h5l-2.500 2.800z" fill="#000"/></svg>
<svg class="a" style="left:33px;top:185px" width="21" height="20" viewBox="0 0 21 20" ><rect x="2.500" y="3.500" width="14" height="14" fill="#fafad8" stroke="#e8d800" stroke-width="1.600"/><path d="M5 10l4 5 7-11" fill="none" stroke="#2fbb22" stroke-width="2.600"/><path d="M15.500 0h5l-2.500 2.800z" fill="#000"/></svg>
<svg class="a" style="left:33px;top:211px" width="21" height="20" viewBox="0 0 21 20" ><path d="M2 7q4-6 7 3t8 4" fill="none" stroke="#3f6fd6" stroke-width="1.600"/><path d="M2 14q5 4 8-3t7-6" fill="none" stroke="#3f6fd6" stroke-width="1.600"/><path d="M4 17l2.500-5 9-9.500 2.500 2.500-9 9.500z" fill="#e8a040" stroke="#7a4a10" stroke-width=".8"/><path d="M4 17l2.500-5 2.500 2.500z" fill="#f4dcb0" stroke="#7a4a10" stroke-width=".6"/><path d="M4 17l1-2 1 1z" fill="#222"/><path d="M15.500 0h5l-2.500 2.800z" fill="#000"/></svg>
<svg class="a" style="left:33px;top:237px" width="21" height="20" viewBox="0 0 21 20" ><path d="M5 4l14-2-3 13-14 3z" fill="#5c96ec" stroke="#2a5ad0" stroke-width="1"/><path d="M12 3l-3 14M4 10.500l13-2" stroke="#dbe8ff" stroke-width="1.200"/><path d="M15.500 0h5l-2.500 2.800z" fill="#000"/></svg>
<svg class="a" style="left:33px;top:263px" width="21" height="20" viewBox="0 0 21 20" ><path d="M2 6l9-3 8 3v8l-9 5-8-4z" fill="#8a8a8a" stroke="#444" stroke-width=".8"/><path d="M2 6l8 4 9-4-8-3z" fill="#d8d8d8" stroke="#444" stroke-width=".7"/><path d="M10 10v9l9-5v-8z" fill="#5a5a5a"/><path d="M15.500 0h5l-2.500 2.800z" fill="#000"/></svg>
<svg class="a" style="left:33px;top:289px" width="21" height="20" viewBox="0 0 21 20" ><path d="M1.500 5v13M18.500 5v13" stroke="#111" stroke-width="1.200"/><path d="M2 9h16" stroke="#111" stroke-width="1"/><path d="M2 9l4-2.500v5zM18 9l-4-2.500v5z" fill="#f0e010" stroke="#111" stroke-width=".6"/><path d="M15.500 0h5l-2.500 2.800z" fill="#000"/></svg>
<svg class="a" style="left:33px;top:315px" width="21" height="20" viewBox="0 0 21 20" ><path d="M3 9l7-6v3.500q8 0 8 7q0 3-2 4.500q1-7-6-6.500v3.500z" fill="#a9a9a9" stroke="#8a8a8a" stroke-width=".6"/><path d="M15.500 0h5l-2.500 2.800z" fill="#000"/></svg>
<svg class="a" style="left:33px;top:341px" width="21" height="20" viewBox="0 0 21 20" ><path d="M1 8h6l1.500 1.500h9v8.500h-16.500z" fill="#f0f4fc" stroke="#333" stroke-width=".9"/><path d="M1 8l2-6h6l1 1.500h6l-1 5" fill="#f6d978" stroke="#c09a30" stroke-width=".8"/><path d="M8 4q3-3 7-2l-.500-1.500 3.500 2.500-3.500 2.500v-1.500q-3 0-7 2z" fill="#35b320" stroke="#1e7a10" stroke-width=".4"/><rect x="4" y="12" width="6" height="3" fill="#fff" stroke="#444" stroke-width=".6"/></svg>
<div class="a" style="left:60px;top:109px;width:1860px;height:892px;background:linear-gradient(180deg,#02021a 0%,#44628b 100%)"></div>
<svg class="a" style="left:0;top:0" width="1920" height="1048" viewBox="0 0 1920 1048">
<defs><linearGradient id="bg" x1="0" x2="0" y1="0" y2="1"><stop offset="0" stop-color="#b6b6b2"/><stop offset=".3" stop-color="#c6c6c2"/><stop offset=".7" stop-color="#9a9a98"/><stop offset="1" stop-color="#7a7a78"/></linearGradient><linearGradient id="rod" gradientUnits="userSpaceOnUse" x1="0" x2="0" y1="0" y2="14.6"><stop offset="0" stop-color="#937f7f"/><stop offset=".42" stop-color="#cbb3b3"/><stop offset="1" stop-color="#826c6c"/></linearGradient></defs>
<rect x="1417.5" y="348.5" width="39.5" height="31.5" fill="#232a4b" stroke="#b4b4b4" stroke-width="1" stroke-dasharray="5 3.5"/>
<g>
<polygon points="313.7,441.3 1410.7,533.7 1410.7,538.2 313.7,445.8" fill="#8f8fa3" stroke="#000" stroke-width="1.2" stroke-linejoin="round" />
<g><rect x="396.5" y="453.5" width="10" height="8.5" fill="#66666e" stroke="#000"/><ellipse cx="402" cy="458" rx="3" ry="2.4" fill="#111"/></g>
<g><rect x="1131" y="516" width="11.5" height="8.5" fill="#66666e" stroke="#000"/><ellipse cx="1137" cy="520.5" rx="3" ry="2.4" fill="#111"/></g>
<path d="M338 271Q338.4 268 341.4 268.3L1432.4 360.1Q1435.4 360.4 1435 363.3L1411.1 530.7Q1410.7 533.7 1407.7 533.4L316.7 441.6Q313.7 441.3 314.1 438.3ZM556.5 321L798 341.3L796.5 455L538.3 433.3ZM933 352L1120.9 368L1105 482.5L922 467Z" fill="#c8c8dc" fill-rule="evenodd" stroke="#000" stroke-width="1.300" stroke-linejoin="round"/>
<polygon points="512,303.5 863,333.1 862.3,337.7 511.3,308.1" fill="#77778a" stroke="#000" stroke-width="0.7" stroke-linejoin="round" />
<polygon points="935,339.1 1123,355 1122.3,359.6 934.3,343.7" fill="#77778a" stroke="#000" stroke-width="0.7" stroke-linejoin="round" />
<g transform="matrix(1 0.0842 -0.1425 1 509 309.8)"><rect width="356" height="14.6" fill="url(#rod)"/></g>
<g transform="matrix(1 0.0842 -0.1425 1 931 345.4)"><rect width="190.500" height="14.6" fill="url(#rod)"/></g>
<polyline points="1121.5,361.2 1119.4,376" fill="none" stroke="#6d5c5c" stroke-width="1" />
<polygon points="374.5,266.6 443,272.3 440.2,291.7 371.7,286" fill="#77778a" stroke="#000" stroke-width="0.8" stroke-linejoin="round" /><path d="M374.1 269Q374.5 266.6 377 266.8L440.5 272.1Q443 272.3 442.6 274.8L441.2 284.9Q440.9 287.3 438.4 287.1L374.9 281.8Q372.4 281.6 372.7 279.1Z" fill="#c8c8dc" stroke="#000" stroke-width="1"/>
<polygon points="513,275.6 712,292.4 709.2,311.8 510.2,295" fill="#77778a" stroke="#000" stroke-width="0.8" stroke-linejoin="round" /><path d="M512.6 278.1Q513 275.6 515.5 275.8L709.5 292.1Q712 292.4 711.6 294.8L710.2 304.9Q709.9 307.4 707.4 307.1L513.4 290.8Q510.9 290.6 511.2 288.1Z" fill="#c8c8dc" stroke="#000" stroke-width="1"/>
<polygon points="717,293.2 866,305.7 863.2,325.1 714.2,312.6" fill="#77778a" stroke="#000" stroke-width="0.8" stroke-linejoin="round" /><path d="M716.6 295.7Q717 293.2 719.5 293.4L863.5 305.5Q866 305.7 865.6 308.2L864.2 318.3Q863.9 320.7 861.4 320.5L717.4 308.4Q714.9 308.2 715.2 305.7Z" fill="#c8c8dc" stroke="#000" stroke-width="1"/>
<polygon points="934,311.9 1200,334.3 1197.2,353.7 931.2,331.3" fill="#77778a" stroke="#000" stroke-width="0.8" stroke-linejoin="round" /><path d="M933.6 314.4Q934 311.9 936.5 312.1L1197.5 334.1Q1200 334.3 1199.6 336.8L1198.2 346.8Q1197.9 349.3 1195.4 349.1L934.4 327.1Q931.9 326.9 932.2 324.4Z" fill="#c8c8dc" stroke="#000" stroke-width="1"/>
<polygon points="1201,335.7 1288,343 1285.2,362.4 1198.2,355.1" fill="#77778a" stroke="#000" stroke-width="0.8" stroke-linejoin="round" /><path d="M1200.6 338.2Q1201 335.7 1203.5 335.9L1285.5 342.8Q1288 343 1287.6 345.5L1286.2 355.6Q1285.9 358 1283.4 357.8L1201.4 350.9Q1198.9 350.7 1199.2 348.2Z" fill="#c8c8dc" stroke="#000" stroke-width="1"/>
<polygon points="1355,348.2 1399,351.9 1396.2,371.3 1352.2,367.6" fill="#77778a" stroke="#000" stroke-width="0.8" stroke-linejoin="round" /><path d="M1354.6 350.7Q1355 348.2 1357.5 348.4L1396.5 351.7Q1399 351.9 1398.6 354.4L1397.2 364.4Q1396.9 366.9 1394.4 366.7L1355.4 363.4Q1352.9 363.2 1353.2 360.7Z" fill="#c8c8dc" stroke="#000" stroke-width="1"/>
<ellipse cx="385.8" cy="273.7" rx="3.2" ry="2.4000000000000004" fill="#000" stroke="none" stroke-width="1" transform="rotate(5 385.8 273.7)"/>
<ellipse cx="391.5" cy="275" rx="0.8" ry="0.6000000000000001" fill="#000" stroke="none" stroke-width="1" transform="rotate(5 391.5 275)"/>
<ellipse cx="706.7" cy="299.5" rx="1.3" ry="0.9750000000000001" fill="#000" stroke="none" stroke-width="1" transform="rotate(5 706.7 299.5)"/>
<ellipse cx="737" cy="301.5" rx="1.2" ry="0.8999999999999999" fill="#000" stroke="none" stroke-width="1" transform="rotate(5 737 301.5)"/>
<ellipse cx="858.5" cy="312.4" rx="1.4" ry="1.0499999999999998" fill="#000" stroke="none" stroke-width="1" transform="rotate(5 858.5 312.4)"/>
<ellipse cx="981" cy="322.2" rx="1.2" ry="0.8999999999999999" fill="#000" stroke="none" stroke-width="1" transform="rotate(5 981 322.2)"/>
<ellipse cx="1085" cy="331.2" rx="1.3" ry="0.9750000000000001" fill="#000" stroke="none" stroke-width="1" transform="rotate(5 1085 331.2)"/>
<ellipse cx="1189.5" cy="340" rx="1.2" ry="0.8999999999999999" fill="#000" stroke="none" stroke-width="1" transform="rotate(5 1189.5 340)"/>
<ellipse cx="1386" cy="358" rx="3.2" ry="2.4000000000000004" fill="#000" stroke="none" stroke-width="1" transform="rotate(5 1386 358)"/>
<ellipse cx="353.3" cy="285.3" rx="4" ry="2.72" fill="#777783" stroke="#000" stroke-width="1" transform="rotate(5 353.3 285.3)"/>
<ellipse cx="421.7" cy="294.7" rx="4" ry="2.72" fill="#000" stroke="none" stroke-width="1" transform="rotate(5 421.7 294.7)"/>
<ellipse cx="392.8" cy="316.7" rx="3.4" ry="2.3120000000000003" fill="#c8c8dc" stroke="#000" stroke-width="1.2" transform="rotate(5 392.8 316.7)"/>
<ellipse cx="403" cy="311" rx="1.5" ry="1.02" fill="#777783" stroke="#000" stroke-width="1" transform="rotate(5 403 311)"/>
<ellipse cx="382.8" cy="322" rx="1.6" ry="1.088" fill="#777783" stroke="#000" stroke-width="1" transform="rotate(5 382.8 322)"/>
<ellipse cx="343.7" cy="355.5" rx="4" ry="2.72" fill="#777783" stroke="#000" stroke-width="1" transform="rotate(5 343.7 355.5)"/>
<ellipse cx="385.5" cy="384" rx="3" ry="2.04" fill="#777783" stroke="#000" stroke-width="1" transform="rotate(5 385.5 384)"/>
<ellipse cx="417.5" cy="386.7" rx="3" ry="2.04" fill="#777783" stroke="#000" stroke-width="1" transform="rotate(5 417.5 386.7)"/>
<ellipse cx="333.3" cy="426" rx="4.4" ry="2.9920000000000004" fill="#777783" stroke="#000" stroke-width="1" transform="rotate(5 333.3 426)"/>
<ellipse cx="380.8" cy="415.8" rx="3" ry="2.04" fill="#777783" stroke="#000" stroke-width="1" transform="rotate(5 380.8 415.8)"/>
<ellipse cx="404.6" cy="415.2" rx="4" ry="2.72" fill="#000" stroke="none" stroke-width="1" transform="rotate(5 404.6 415.2)"/>
<ellipse cx="413" cy="419" rx="2.6" ry="1.7680000000000002" fill="#777783" stroke="#000" stroke-width="1" transform="rotate(5 413 419)"/>
<polygon points="374.2,422.5 416.7,426.1 415,438.1 372.5,434.5" fill="#77778a" stroke="#000" stroke-width="1.2" stroke-linejoin="round" /><polygon points="374.2,422.5 416.7,426.1 416.2,429.6 373.7,426" fill="#c8c8dc" stroke="#000" stroke-width="1.2" stroke-linejoin="round" /><line x1="376.5" y1="427.5" x2="411" y2="430.4" stroke="#000" stroke-width="1.3" stroke-dasharray="9 2.5"/>
<polyline points="507.5,323 491.7,430 537.5,433.6" fill="none" stroke="#000" stroke-width="0.9" />
<polygon points="554.5,326.5 557.5,326.8 545.5,418 542.5,417.7" fill="#77778a" stroke="#000" stroke-width="0.8" stroke-linejoin="round" />
<polygon points="525,322.3 553.5,324.7 551.8,336.7 523.3,334.3" fill="#77778a" stroke="#000" stroke-width="1.2" stroke-linejoin="round" /><polygon points="525,322.3 553.5,324.7 553.1,327.7 524.6,325.3" fill="#c8c8dc" stroke="#000" stroke-width="1.2" stroke-linejoin="round" /><line x1="527.4" y1="326.8" x2="547.9" y2="328.5" stroke="#000" stroke-width="1.3" stroke-dasharray="9 2.5"/>
<polygon points="520,360 548.5,362.4 546.8,374.4 518.3,372" fill="#77778a" stroke="#000" stroke-width="1.2" stroke-linejoin="round" /><polygon points="520,360 548.5,362.4 548.1,365.4 519.6,363" fill="#c8c8dc" stroke="#000" stroke-width="1.2" stroke-linejoin="round" /><line x1="522.4" y1="364.5" x2="542.9" y2="366.2" stroke="#000" stroke-width="1.3" stroke-dasharray="9 2.5"/>
<polygon points="514,396.5 542.5,398.9 540.8,410.9 512.3,408.5" fill="#77778a" stroke="#000" stroke-width="1.2" stroke-linejoin="round" /><polygon points="514,396.5 542.5,398.9 542.1,401.9 513.6,399.5" fill="#c8c8dc" stroke="#000" stroke-width="1.2" stroke-linejoin="round" /><line x1="516.4" y1="401" x2="536.9" y2="402.7" stroke="#000" stroke-width="1.3" stroke-dasharray="9 2.5"/>
<polygon points="505,343.3 520,344.6 517.3,363.6 502.3,362.3" fill="#77778a" stroke="#000" stroke-width="1.2" stroke-linejoin="round" />
<polygon points="502.2,363.5 517.2,364.8 513.9,388.3 498.9,387" fill="#17213f" stroke="#000" stroke-width="1.2" stroke-linejoin="round" />
<ellipse cx="509.7" cy="341.3" rx="2.4" ry="1.6320000000000001" fill="#000" stroke="none" stroke-width="1" transform="rotate(5 509.7 341.3)"/>
<ellipse cx="524" cy="343" rx="2.4" ry="1.6320000000000001" fill="#000" stroke="none" stroke-width="1" transform="rotate(5 524 343)"/>
<ellipse cx="539.5" cy="344.3" rx="2.4" ry="1.6320000000000001" fill="#000" stroke="none" stroke-width="1" transform="rotate(5 539.5 344.3)"/>
<ellipse cx="502.5" cy="389.5" rx="2.2" ry="1.4960000000000002" fill="#000" stroke="none" stroke-width="1" transform="rotate(5 502.5 389.5)"/>
<ellipse cx="517.5" cy="390.5" rx="2.2" ry="1.4960000000000002" fill="#000" stroke="none" stroke-width="1" transform="rotate(5 517.5 390.5)"/>
<ellipse cx="532.5" cy="391.5" rx="2.2" ry="1.4960000000000002" fill="#000" stroke="none" stroke-width="1" transform="rotate(5 532.5 391.5)"/>
<ellipse cx="505" cy="394.2" rx="2.4" ry="1.6320000000000001" fill="#777783" stroke="#000" stroke-width="1" transform="rotate(5 505 394.2)"/>
<ellipse cx="500.8" cy="425.8" rx="2.6" ry="1.7680000000000002" fill="#777783" stroke="#000" stroke-width="1" transform="rotate(5 500.8 425.8)"/>
<ellipse cx="533" cy="428.3" rx="2.6" ry="1.7680000000000002" fill="#777783" stroke="#000" stroke-width="1" transform="rotate(5 533 428.3)"/>
<polygon points="520.8,434.7 563.3,438.3 561.6,450.3 519.1,446.7" fill="#77778a" stroke="#000" stroke-width="1.2" stroke-linejoin="round" /><polygon points="520.8,434.7 563.3,438.3 562.8,441.8 520.3,438.2" fill="#c8c8dc" stroke="#000" stroke-width="1.2" stroke-linejoin="round" /><line x1="523.1" y1="439.7" x2="557.6" y2="442.6" stroke="#000" stroke-width="1.3" stroke-dasharray="9 2.5"/>
<ellipse cx="589.5" cy="449.7" rx="2.8" ry="1.904" fill="#777783" stroke="#000" stroke-width="1" transform="rotate(5 589.5 449.7)"/>
<ellipse cx="621.8" cy="452.3" rx="2.8" ry="1.904" fill="#777783" stroke="#000" stroke-width="1" transform="rotate(5 621.8 452.3)"/>
<ellipse cx="654" cy="454.9" rx="2.8" ry="1.904" fill="#777783" stroke="#000" stroke-width="1" transform="rotate(5 654 454.9)"/>
<ellipse cx="686.3" cy="457.6" rx="2.8" ry="1.904" fill="#777783" stroke="#000" stroke-width="1" transform="rotate(5 686.3 457.6)"/>
<ellipse cx="718.6" cy="460.2" rx="2.8" ry="1.904" fill="#777783" stroke="#000" stroke-width="1" transform="rotate(5 718.6 460.2)"/>
<ellipse cx="750.9" cy="462.8" rx="2.8" ry="1.904" fill="#777783" stroke="#000" stroke-width="1" transform="rotate(5 750.9 462.8)"/>
<polyline points="817,346.5 797.5,455 840.6,458.8" fill="none" stroke="#000" stroke-width="0.9" />
<polygon points="811,346.5 838,348.8 836.3,360.8 809.3,358.5" fill="#77778a" stroke="#000" stroke-width="1.2" stroke-linejoin="round" /><polygon points="811,346.5 838,348.8 837.6,351.8 810.6,349.5" fill="#c8c8dc" stroke="#000" stroke-width="1.2" stroke-linejoin="round" /><line x1="813.4" y1="351" x2="832.4" y2="352.6" stroke="#000" stroke-width="1.3" stroke-dasharray="9 2.5"/>
<polygon points="806,384 833,386.3 831.3,398.3 804.3,396" fill="#77778a" stroke="#000" stroke-width="1.2" stroke-linejoin="round" /><polygon points="806,384 833,386.3 832.6,389.3 805.6,387" fill="#c8c8dc" stroke="#000" stroke-width="1.2" stroke-linejoin="round" /><line x1="808.4" y1="388.5" x2="827.4" y2="390.1" stroke="#000" stroke-width="1.3" stroke-dasharray="9 2.5"/>
<polygon points="801,420.6 828,422.9 826.3,434.9 799.3,432.6" fill="#77778a" stroke="#000" stroke-width="1.2" stroke-linejoin="round" /><polygon points="801,420.6 828,422.9 827.6,425.9 800.6,423.6" fill="#c8c8dc" stroke="#000" stroke-width="1.2" stroke-linejoin="round" /><line x1="803.4" y1="425.1" x2="822.4" y2="426.7" stroke="#000" stroke-width="1.3" stroke-dasharray="9 2.5"/>
<polygon points="809.5,348 812,348.2 798.5,448 796,447.6" fill="#c8c8dc" stroke="#000" stroke-width="0.7" stroke-linejoin="round" />
<polygon points="840.5,371 855,372.2 852.2,391.7 837.7,390.5" fill="#77778a" stroke="#000" stroke-width="1.2" stroke-linejoin="round" />
<polygon points="837.5,391 852,392.2 848.5,416.7 834,415.5" fill="#17213f" stroke="#000" stroke-width="1.2" stroke-linejoin="round" />
<ellipse cx="820.5" cy="366" rx="2.2" ry="1.4960000000000002" fill="#000" stroke="none" stroke-width="1" transform="rotate(5 820.5 366)"/>
<ellipse cx="835" cy="367.3" rx="2.2" ry="1.4960000000000002" fill="#000" stroke="none" stroke-width="1" transform="rotate(5 835 367.3)"/>
<ellipse cx="849.5" cy="368.5" rx="2.2" ry="1.4960000000000002" fill="#000" stroke="none" stroke-width="1" transform="rotate(5 849.5 368.5)"/>
<ellipse cx="813.8" cy="416" rx="2.2" ry="1.4960000000000002" fill="#000" stroke="none" stroke-width="1" transform="rotate(5 813.8 416)"/>
<ellipse cx="828.8" cy="417" rx="2.2" ry="1.4960000000000002" fill="#000" stroke="none" stroke-width="1" transform="rotate(5 828.8 417)"/>
<ellipse cx="843.8" cy="418" rx="2.2" ry="1.4960000000000002" fill="#000" stroke="none" stroke-width="1" transform="rotate(5 843.8 418)"/>
<ellipse cx="807.5" cy="419.8" rx="2.2" ry="1.4960000000000002" fill="#777783" stroke="#000" stroke-width="1" transform="rotate(5 807.5 419.8)"/>
<ellipse cx="840" cy="422.5" rx="2.6" ry="1.7680000000000002" fill="#777783" stroke="#000" stroke-width="1" transform="rotate(5 840 422.5)"/>
<ellipse cx="803" cy="451.6" rx="2.6" ry="1.7680000000000002" fill="#777783" stroke="#000" stroke-width="1" transform="rotate(5 803 451.6)"/>
<ellipse cx="835" cy="454.4" rx="2.6" ry="1.7680000000000002" fill="#777783" stroke="#000" stroke-width="1" transform="rotate(5 835 454.4)"/>
<polygon points="779.4,457.3 821.9,460.9 820.2,472.9 777.7,469.3" fill="#77778a" stroke="#000" stroke-width="1.2" stroke-linejoin="round" /><polygon points="779.4,457.3 821.9,460.9 821.4,464.4 778.9,460.8" fill="#c8c8dc" stroke="#000" stroke-width="1.2" stroke-linejoin="round" /><line x1="781.7" y1="462.3" x2="816.2" y2="465.2" stroke="#000" stroke-width="1.3" stroke-dasharray="9 2.5"/>
<ellipse cx="945.8" cy="479.7" rx="2.8" ry="1.904" fill="#777783" stroke="#000" stroke-width="1" transform="rotate(5 945.8 479.7)"/>
<ellipse cx="978.1" cy="482.3" rx="2.8" ry="1.904" fill="#777783" stroke="#000" stroke-width="1" transform="rotate(5 978.1 482.3)"/>
<ellipse cx="1010.4" cy="484.9" rx="2.8" ry="1.904" fill="#777783" stroke="#000" stroke-width="1" transform="rotate(5 1010.4 484.9)"/>
<ellipse cx="1042.7" cy="487.6" rx="2.8" ry="1.904" fill="#777783" stroke="#000" stroke-width="1" transform="rotate(5 1042.7 487.6)"/>
<ellipse cx="913.5" cy="477" rx="2.6" ry="1.7680000000000002" fill="#777783" stroke="#000" stroke-width="1" transform="rotate(5 913.5 477)"/>
<polygon points="1125,372.5 1153.5,374.9 1151.6,387.9 1123.1,385.5" fill="#77778a" stroke="#000" stroke-width="1.2" stroke-linejoin="round" /><polygon points="1125,372.5 1153.5,374.9 1153,378.4 1124.5,376" fill="#c8c8dc" stroke="#000" stroke-width="1.2" stroke-linejoin="round" /><line x1="1127.3" y1="377.5" x2="1147.8" y2="379.2" stroke="#000" stroke-width="1.3" stroke-dasharray="9 2.5"/>
<polygon points="1120,410 1148,412.4 1146.1,425.4 1118.1,423" fill="#77778a" stroke="#000" stroke-width="1.2" stroke-linejoin="round" /><polygon points="1120,410 1148,412.4 1147.5,415.9 1119.5,413.5" fill="#c8c8dc" stroke="#000" stroke-width="1.2" stroke-linejoin="round" /><line x1="1122.3" y1="415" x2="1142.3" y2="416.6" stroke="#000" stroke-width="1.3" stroke-dasharray="9 2.5"/>
<polygon points="1114.5,447.3 1143,449.7 1141.1,462.7 1112.6,460.3" fill="#77778a" stroke="#000" stroke-width="1.2" stroke-linejoin="round" /><polygon points="1114.5,447.3 1143,449.7 1142.5,453.2 1114,450.8" fill="#c8c8dc" stroke="#000" stroke-width="1.2" stroke-linejoin="round" /><line x1="1116.8" y1="452.3" x2="1137.3" y2="454" stroke="#000" stroke-width="1.3" stroke-dasharray="9 2.5"/>
<polygon points="1153.5,376.5 1158.5,377 1148,465 1143,464.5" fill="#c8c8dc" stroke="#000" stroke-width="0.9" stroke-linejoin="round" />
<polyline points="1156,377 1145.5,464.6" fill="none" stroke="#000" stroke-width="0.8" />
<polygon points="1123.3,485.8 1165.8,489.4 1164.1,501.4 1121.6,497.8" fill="#77778a" stroke="#000" stroke-width="1.2" stroke-linejoin="round" /><polygon points="1123.3,485.8 1165.8,489.4 1165.3,492.9 1122.8,489.3" fill="#c8c8dc" stroke="#000" stroke-width="1.2" stroke-linejoin="round" /><line x1="1125.6" y1="490.8" x2="1160.1" y2="493.7" stroke="#000" stroke-width="1.3" stroke-dasharray="9 2.5"/>
<ellipse cx="1156.7" cy="356.7" rx="3.6" ry="2.4480000000000004" fill="#000" stroke="none" stroke-width="1" transform="rotate(5 1156.7 356.7)"/>
<ellipse cx="1225" cy="359" rx="3.4" ry="2.3120000000000003" fill="#777783" stroke="#000" stroke-width="1" transform="rotate(5 1225 359)"/>
<ellipse cx="1215" cy="429" rx="3.6" ry="2.4480000000000004" fill="#777783" stroke="#000" stroke-width="1" transform="rotate(5 1215 429)"/>
<ellipse cx="1167.5" cy="449.6" rx="2.7" ry="1.8360000000000003" fill="#777783" stroke="#000" stroke-width="1" transform="rotate(5 1167.5 449.6)"/>
<ellipse cx="1135" cy="446.5" rx="2.3" ry="1.564" fill="#777783" stroke="#000" stroke-width="1" transform="rotate(5 1135 446.5)"/>
<ellipse cx="1130.5" cy="478.8" rx="2.6" ry="1.7680000000000002" fill="#777783" stroke="#000" stroke-width="1" transform="rotate(5 1130.5 478.8)"/>
<ellipse cx="1139.5" cy="477" rx="3.6" ry="2.4480000000000004" fill="#000" stroke="none" stroke-width="1" transform="rotate(5 1139.5 477)"/>
<ellipse cx="1162.5" cy="481.8" rx="2.8" ry="1.904" fill="#777783" stroke="#000" stroke-width="1" transform="rotate(5 1162.5 481.8)"/>
<ellipse cx="1204.8" cy="498.6" rx="3.8" ry="2.584" fill="#777783" stroke="#000" stroke-width="1" transform="rotate(5 1204.8 498.6)"/>
<ellipse cx="1281.6" cy="348.8" rx="3" ry="2.04" fill="#000" stroke="none" stroke-width="1" transform="rotate(5 1281.6 348.8)"/>
<polyline points="1406.7,378.5 1394,484 1391.3,506" fill="none" stroke="#000" stroke-width="0.9" /><ellipse cx="1357.5" cy="362.7" rx="2.6" ry="2.2" fill="#c8c8dc" stroke="#000" stroke-width="1.2" transform="rotate(5 1357.5 362.7)"/><polygon points="1370,393.3 1401.7,395.8 1401.3,398.5 1373,396.3 1361.5,483.5 1358.3,483.2" fill="#c8c8dc" stroke="#000" stroke-width="0.8" stroke-linejoin="round" /><polyline points="1374.5,396.5 1363.5,483.7" fill="none" stroke="#000" stroke-width="0.8" /><polygon points="1371,397.5 1402,400.1 1401.2,405.6 1370.2,403" fill="#77778a" stroke="#000" stroke-width="0.8" stroke-linejoin="round" /><polygon points="1366.5,435.5 1397.5,438.1 1396.7,443.6 1365.7,441" fill="#77778a" stroke="#000" stroke-width="0.8" stroke-linejoin="round" /><polygon points="1362,469.5 1393,472.1 1392.2,477.6 1361.2,475" fill="#77778a" stroke="#000" stroke-width="0.8" stroke-linejoin="round" /><polygon points="1358,471 1364,471.5 1362.3,483.5 1356.3,483" fill="#77778a" stroke="#000" stroke-width="0.8" stroke-linejoin="round" /><g transform="translate(1393 371.5)"><path d="M-2 -1l44 3.8v3.4l-44 -3.8z" fill="#555" stroke="#111" stroke-width=".8"/><path d="M0 -2.5h9v5h-9zM20 -1h9v5h-9z" fill="#333"/><rect x="32" y="1.2" width="15" height="4.6" rx="1.6" fill="#d0d0d0" stroke="#444" stroke-width=".7"/><path d="M18 5h11l-.8 11.5h-11z" fill="#5c5c63" stroke="#111" stroke-width=".8"/><path d="M17.5 15.5h11.5v2h-11.5z" fill="#222"/><ellipse cx="5.5" cy="8.5" rx="2.6" ry="3.2" fill="#c9c9c9" stroke="#333" stroke-width=".7"/></g><g transform="translate(1388 404.5)"><path d="M-2 -1l44 3.8v3.4l-44 -3.8z" fill="#555" stroke="#111" stroke-width=".8"/><path d="M0 -2.5h9v5h-9zM20 -1h9v5h-9z" fill="#333"/><rect x="32" y="1.2" width="15" height="4.6" rx="1.6" fill="#d0d0d0" stroke="#444" stroke-width=".7"/><path d="M18 5h11l-.8 11.5h-11z" fill="#5c5c63" stroke="#111" stroke-width=".8"/><path d="M17.5 15.5h11.5v2h-11.5z" fill="#222"/><ellipse cx="5.5" cy="8.5" rx="2.6" ry="3.2" fill="#c9c9c9" stroke="#333" stroke-width=".7"/></g><g transform="translate(1383 438)"><path d="M-2 -1l44 3.8v3.4l-44 -3.8z" fill="#555" stroke="#111" stroke-width=".8"/><path d="M0 -2.5h9v5h-9zM20 -1h9v5h-9z" fill="#333"/><rect x="32" y="1.2" width="15" height="4.6" rx="1.6" fill="#d0d0d0" stroke="#444" stroke-width=".7"/><path d="M18 5h11l-.8 11.5h-11z" fill="#5c5c63" stroke="#111" stroke-width=".8"/><path d="M17.5 15.5h11.5v2h-11.5z" fill="#222"/><ellipse cx="5.5" cy="8.5" rx="2.6" ry="3.2" fill="#c9c9c9" stroke="#333" stroke-width=".7"/></g><g transform="translate(1378 471.5)"><path d="M-2 -1l44 3.8v3.4l-44 -3.8z" fill="#555" stroke="#111" stroke-width=".8"/><path d="M0 -2.5h9v5h-9zM20 -1h9v5h-9z" fill="#333"/><rect x="32" y="1.2" width="15" height="4.6" rx="1.6" fill="#d0d0d0" stroke="#444" stroke-width=".7"/><path d="M18 5h11l-.8 11.5h-11z" fill="#5c5c63" stroke="#111" stroke-width=".8"/><path d="M17.5 15.5h11.5v2h-11.5z" fill="#222"/><ellipse cx="5.5" cy="8.5" rx="2.6" ry="3.2" fill="#c9c9c9" stroke="#333" stroke-width=".7"/></g><ellipse cx="1343.5" cy="461" rx="3" ry="2.04" fill="#c8c8dc" stroke="#000" stroke-width="1.2" transform="rotate(5 1343.5 461)"/><ellipse cx="1342" cy="471.5" rx="3" ry="2.04" fill="#c8c8dc" stroke="#000" stroke-width="1.2" transform="rotate(5 1342 471.5)"/><ellipse cx="1338.8" cy="492" rx="3.2" ry="2.176" fill="#c8c8dc" stroke="#000" stroke-width="1.2" transform="rotate(5 1338.8 492)"/><ellipse cx="1336.5" cy="507.5" rx="3.2" ry="2.176" fill="#c8c8dc" stroke="#000" stroke-width="1.2" transform="rotate(5 1336.5 507.5)"/><ellipse cx="1355" cy="466" rx="2.6" ry="1.7680000000000002" fill="#777783" stroke="#000" stroke-width="1" transform="rotate(5 1355 466)"/><ellipse cx="1350" cy="497.5" rx="2.4" ry="1.6320000000000001" fill="#777783" stroke="#000" stroke-width="1" transform="rotate(5 1350 497.5)"/><ellipse cx="1383" cy="500.5" rx="2.8" ry="1.904" fill="#777783" stroke="#000" stroke-width="1" transform="rotate(5 1383 500.5)"/><ellipse cx="1402.5" cy="502" rx="3.4" ry="2.3120000000000003" fill="#000" stroke="none" stroke-width="1" transform="rotate(5 1402.5 502)"/><polygon points="1343.5,504.5 1385.5,508 1383.7,520.5 1341.7,517" fill="#77778a" stroke="#000" stroke-width="1.2" stroke-linejoin="round" /><polygon points="1343.5,504.5 1385.5,508 1385,511.5 1343,508" fill="#c8c8dc" stroke="#000" stroke-width="1.2" stroke-linejoin="round" /><line x1="1345.8" y1="509.5" x2="1379.8" y2="512.3" stroke="#000" stroke-width="1.3" stroke-dasharray="9 2.5"/><polygon points="1391.5,505.5 1415.5,507.5 1414.1,517 1390.1,515" fill="#77778a" stroke="#000" stroke-width="0.8" stroke-linejoin="round" /><ellipse cx="1395" cy="516" rx="3" ry="1.8" fill="#333" stroke="none" stroke-width="1" transform="rotate(5 1395 516)"/>
<g><g transform="translate(404.9 444.2)"><path d="M-1.500 30h17.500l-.500 15.500h-18z" fill="#7a7a82" stroke="#000" stroke-width="1.200"/><path d="M-1.700 39.500l17.300 1.500" stroke="#000" stroke-width=".8"/><path d="M15.300 1.500l3.200 2.500-.300 7.500-1.500 20-2.700 2z" fill="#26262c" stroke="#000" stroke-width=".8"/><path d="M16 12.500l3.600 .500-.800 9.500-3.400-.500z" fill="#c9b0b0"/><path d="M1.500 0l14 1.400-.800 32-16.200-1.800z" fill="url(#bg)" stroke="#000" stroke-width="1.300"/><path d="M2.700 1.500l-1.500 29.500" stroke="#e8e8e4" stroke-width=".9"/><path d="M8.200 3.300q2-.300 1.800 1.300q.300 2-1.900 1.900q-1.500-.300-1.300-1.700q0-1.300 1.400-1.500z" fill="#33333a"/></g><polygon points="403.3,545 465.3,553 463.8,556.4 415.1,550.8" fill="#55584f" stroke="#000" stroke-width="1.2" stroke-linejoin="round" /><polygon points="428.2,436 478.4,440.3 466.6,526.7 466.6,530 465.3,553 403.3,545 405,534 414,527.4 415.7,525.1" fill="#c8c8dc" stroke="#000" stroke-width="1.2" stroke-linejoin="round" /><polygon points="416.3,521.1 466.9,523.8 466.6,528.8 415,526.5" fill="#9d9db3" stroke="#000" stroke-width="0.8" stroke-linejoin="round" /><polygon points="429.3,536.3 436.8,537 435.1,549 427.6,548.3" fill="#55584f" stroke="#000" stroke-width="1.2" stroke-linejoin="round" /><polygon points="468.8,535.6 471.8,535.9 471.1,540.9 468.1,540.6" fill="#eee" stroke="#000" stroke-width="0.6" stroke-linejoin="round" /><polygon points="413.4,526.9 415.9,527.1 415,533.1 412.5,532.9" fill="#eee" stroke="#000" stroke-width="0.6" stroke-linejoin="round" /><polyline points="444.4,494.1 442.2,509.1" fill="none" stroke="#000" stroke-width="2.2" /><ellipse cx="429.2" cy="513.5" rx="4.2" ry="3" fill="#000" stroke="none" stroke-width="1" transform="rotate(5 429.2 513.5)"/><ellipse cx="454.4" cy="515.7" rx="4.2" ry="3" fill="#000" stroke="none" stroke-width="1" transform="rotate(5 454.4 515.7)"/><ellipse cx="430.9" cy="456" rx="3.8" ry="2.8" fill="#000" stroke="none" stroke-width="1" transform="rotate(5 430.9 456)"/><ellipse cx="470" cy="459.3" rx="3.8" ry="2.8" fill="#000" stroke="none" stroke-width="1" transform="rotate(5 470 459.3)"/><g transform="translate(450.3 463.2) scale(1.12)"><path d="M-6 -14h9q3 0 3 3v16q0 3-3 4l-3 4h-5l-2-4q-2-1-2-4v-16q0-3 3-3z" fill="#c8c8dc" stroke="#000" stroke-width="1.500"/><path d="M-4 -9h6v11h-6zM-2 5h5v6h-5z" fill="#cfcfe2" stroke="#000" stroke-width="1.100"/><path d="M3 -10v18M-7 3h4M-5.500 -11.500h8M4.500 -8v13M-4 12.500h6M-6 6l2 5" stroke="#000" stroke-width="1" fill="none"/><path d="M-1 -13.500h3v1.500h-3zM2 8h2.500v3h-2.500z" fill="#000"/><rect x="-10.5" y="-5" width="4" height="7" fill="#b9b9e6" stroke="#000" stroke-width=".7"/><rect x="-10" y="2" width="3.5" height="4" fill="#111"/></g><g transform="translate(475.9 450.2)"><path d="M-.500 30.500h18l-.500 15h-18.500z" fill="#7a7a82" stroke="#000" stroke-width="1.200"/><path d="M-1 39.500l17.800 1.500" stroke="#000" stroke-width=".8"/><path d="M16.500 2l3 2.500 0 8 .800 8-1.800 11-2.500 1.500z" fill="#26262c" stroke="#000" stroke-width=".8"/><path d="M17.500 13l2.300 .300-.300 11-2.300-.300z" fill="#b4b4b0"/><path d="M-.300 12.500l3 .300-.600 9.500-3.200-.400z" fill="#c9b0b0" stroke="#000" stroke-width=".6"/><path d="M2 0l15 1.400-.800 32-16.200-1.800z" fill="url(#bg)" stroke="#000" stroke-width="1.300"/><path d="M3.200 1.500l-1.500 29.500" stroke="#e8e8e4" stroke-width=".9"/><path d="M9.200 3.300q2-.300 1.800 1.300q.300 2-1.900 1.900q-1.500-.300-1.300-1.700q0-1.300 1.400-1.500z" fill="#33333a"/></g><polygon points="420.5,434.4 428.5,435.1 427.7,441.1 419.7,440.4" fill="#77778a" stroke="#000" stroke-width="1.2" stroke-linejoin="round" /><polygon points="478.5,439.3 487.5,440 486.7,446 477.7,445.3" fill="#77778a" stroke="#000" stroke-width="1.2" stroke-linejoin="round" /><polygon points="510.3,284.1 512.7,285.3 490.8,439.3 488.3,439.1" fill="#30303a" stroke="#000" stroke-width="0.8" stroke-linejoin="round" /><polygon points="446.3,246.3 514.9,252.1 488,440.6 419.2,436.3" fill="#c8c8dc" stroke="#000" stroke-width="1.2" stroke-linejoin="round" /><polyline points="441.8,277.8 510.4,283.6" fill="none" stroke="#000" stroke-width="1" /><ellipse cx="450.6" cy="247.9" rx="2.4" ry="1.8" fill="#000" stroke="none" stroke-width="1" transform="rotate(5 450.6 247.9)"/><ellipse cx="470.6" cy="249.6" rx="2.4" ry="1.8" fill="#000" stroke="none" stroke-width="1" transform="rotate(5 470.6 249.6)"/><ellipse cx="490.6" cy="251.2" rx="2.4" ry="1.8" fill="#000" stroke="none" stroke-width="1" transform="rotate(5 490.6 251.2)"/><ellipse cx="510.1" cy="252.9" rx="2.4" ry="1.8" fill="#000" stroke="none" stroke-width="1" transform="rotate(5 510.1 252.9)"/><ellipse cx="483.7" cy="246.4" rx="4.6" ry="2.6" fill="#b8b8b8" stroke="#222" stroke-width=".9"/><ellipse cx="483.7" cy="246.1" rx="2.6" ry="1.3" fill="#e4e4e4" stroke="#333" stroke-width=".6"/><polygon points="453.7,286.4 496.7,290 476.9,429 433.9,425.4" fill="#c8c8dc" stroke="#000" stroke-width="1.2" stroke-linejoin="round" /><polygon points="454.2,286.9 496.2,290.5 494.7,296.9 453.7,293.5" fill="#77778a" stroke="#000" stroke-width="0.8" stroke-linejoin="round" /><polygon points="456.2,293.7 492.7,296.8 474.4,425.8 437.9,422.7" fill="#c8c8dc" stroke="#000" stroke-width="0.9" stroke-linejoin="round" /><polygon points="455.7,315.4 488.2,318.1 487.2,328.6 456.7,325.9" fill="#77778a" stroke="#000" stroke-width="1.2" stroke-linejoin="round" /><path d="M458 298.9Q458.5 295.9 461.4 296.2L488 298.4Q491 298.6 490.5 301.6L488.6 315.2Q488.2 318.1 485.2 317.9L458.7 315.7Q455.7 315.4 456.1 312.4Z" fill="#c8c8dc" stroke="#000" stroke-width="1" stroke-linejoin="round"/><polygon points="451.1,347.4 483.6,350.1 482.6,360.6 452.1,357.9" fill="#77778a" stroke="#000" stroke-width="1.2" stroke-linejoin="round" /><path d="M453.5 330.9Q453.9 327.9 456.9 328.2L483.4 330.4Q486.4 330.6 486 333.6L484 347.2Q483.6 350.1 480.6 349.9L454.1 347.7Q451.1 347.4 451.5 344.4Z" fill="#c8c8dc" stroke="#000" stroke-width="1" stroke-linejoin="round"/><polygon points="445.6,386.4 478.1,389.1 477.1,399.6 446.6,396.9" fill="#77778a" stroke="#000" stroke-width="1.2" stroke-linejoin="round" /><path d="M447.9 369.9Q448.3 366.9 451.3 367.2L477.9 369.4Q480.8 369.6 480.4 372.6L478.5 386.2Q478.1 389.1 475.1 388.9L448.6 386.7Q445.6 386.4 446 383.4Z" fill="#c8c8dc" stroke="#000" stroke-width="1" stroke-linejoin="round"/><polygon points="441,418.4 473.5,421.1 472.5,427.4 442,424.7" fill="#77778a" stroke="#000" stroke-width="1.2" stroke-linejoin="round" /><path d="M443.4 401.9Q443.8 398.9 446.8 399.2L473.3 401.4Q476.3 401.6 475.9 404.6L473.9 418.2Q473.5 421.1 470.5 420.9L444 418.7Q441 418.4 441.4 415.4Z" fill="#c8c8dc" stroke="#000" stroke-width="1" stroke-linejoin="round"/><ellipse cx="448.2" cy="282.9" rx="2" ry="1.5" fill="#c8c8dc" stroke="#000" stroke-width="0.9" transform="rotate(5 448.2 282.9)"/><ellipse cx="502.2" cy="287.4" rx="2" ry="1.5" fill="#c8c8dc" stroke="#000" stroke-width="0.9" transform="rotate(5 502.2 287.4)"/><ellipse cx="442" cy="318.8" rx="2" ry="1.5" fill="#c8c8dc" stroke="#000" stroke-width="0.9" transform="rotate(5 442 318.8)"/><ellipse cx="498.5" cy="323.6" rx="2" ry="1.5" fill="#c8c8dc" stroke="#000" stroke-width="0.9" transform="rotate(5 498.5 323.6)"/><ellipse cx="437.1" cy="353.8" rx="2" ry="1.5" fill="#c8c8dc" stroke="#000" stroke-width="0.9" transform="rotate(5 437.1 353.8)"/><ellipse cx="493.6" cy="358.6" rx="2" ry="1.5" fill="#c8c8dc" stroke="#000" stroke-width="0.9" transform="rotate(5 493.6 358.6)"/><ellipse cx="431.9" cy="389.8" rx="2" ry="1.5" fill="#c8c8dc" stroke="#000" stroke-width="0.9" transform="rotate(5 431.9 389.8)"/><ellipse cx="488.4" cy="394.6" rx="2" ry="1.5" fill="#c8c8dc" stroke="#000" stroke-width="0.9" transform="rotate(5 488.4 394.6)"/><ellipse cx="427.7" cy="426.9" rx="2" ry="1.5" fill="#c8c8dc" stroke="#000" stroke-width="0.9" transform="rotate(5 427.7 426.9)"/><ellipse cx="481.7" cy="431.4" rx="2" ry="1.5" fill="#c8c8dc" stroke="#000" stroke-width="0.9" transform="rotate(5 481.7 431.4)"/><line x1="440.3" y1="430.5" x2="468.3" y2="432.8" stroke="#000" stroke-width="3.6" stroke-dasharray="7 1.5 4 1 9 1.2"/></g>
<g><g transform="translate(826.5 479.7)"><path d="M-1.500 30h17.500l-.500 15.500h-18z" fill="#7a7a82" stroke="#000" stroke-width="1.200"/><path d="M-1.700 39.500l17.300 1.500" stroke="#000" stroke-width=".8"/><path d="M15.300 1.500l3.200 2.500-.300 7.500-1.500 20-2.700 2z" fill="#26262c" stroke="#000" stroke-width=".8"/><path d="M16 12.500l3.600 .500-.800 9.500-3.400-.500z" fill="#c9b0b0"/><path d="M1.500 0l14 1.400-.800 32-16.200-1.800z" fill="url(#bg)" stroke="#000" stroke-width="1.300"/><path d="M2.700 1.500l-1.500 29.500" stroke="#e8e8e4" stroke-width=".9"/><path d="M8.200 3.300q2-.300 1.800 1.300q.300 2-1.900 1.900q-1.500-.300-1.300-1.700q0-1.300 1.400-1.500z" fill="#33333a"/></g><polygon points="824.9,580.5 886.9,588.5 885.4,591.9 836.7,586.3" fill="#55584f" stroke="#000" stroke-width="1.2" stroke-linejoin="round" /><polygon points="849.8,471.5 900,475.8 888.2,562.2 888.2,565.5 886.9,588.5 824.9,580.5 826.6,569.5 835.6,562.9 837.3,560.6" fill="#c8c8dc" stroke="#000" stroke-width="1.2" stroke-linejoin="round" /><polygon points="837.9,556.6 888.5,559.3 888.2,564.3 836.6,562" fill="#9d9db3" stroke="#000" stroke-width="0.8" stroke-linejoin="round" /><polygon points="850.9,571.8 858.4,572.5 856.6,584.5 849.1,583.8" fill="#55584f" stroke="#000" stroke-width="1.2" stroke-linejoin="round" /><polygon points="890.4,571.1 893.4,571.4 892.7,576.4 889.7,576.1" fill="#eee" stroke="#000" stroke-width="0.6" stroke-linejoin="round" /><polygon points="835,562.4 837.5,562.6 836.6,568.6 834.1,568.4" fill="#eee" stroke="#000" stroke-width="0.6" stroke-linejoin="round" /><polyline points="866,529.6 863.9,544.6" fill="none" stroke="#000" stroke-width="2.2" /><ellipse cx="850.8" cy="549" rx="4.2" ry="3" fill="#000" stroke="none" stroke-width="1" transform="rotate(5 850.8 549)"/><ellipse cx="876" cy="551.2" rx="4.2" ry="3" fill="#000" stroke="none" stroke-width="1" transform="rotate(5 876 551.2)"/><ellipse cx="852.5" cy="491.5" rx="3.8" ry="2.8" fill="#000" stroke="none" stroke-width="1" transform="rotate(5 852.5 491.5)"/><ellipse cx="891.6" cy="494.8" rx="3.8" ry="2.8" fill="#000" stroke="none" stroke-width="1" transform="rotate(5 891.6 494.8)"/><g transform="translate(871.9 498.7) scale(1.12)"><path d="M-6 -14h9q3 0 3 3v16q0 3-3 4l-3 4h-5l-2-4q-2-1-2-4v-16q0-3 3-3z" fill="#c8c8dc" stroke="#000" stroke-width="1.500"/><path d="M-4 -9h6v11h-6zM-2 5h5v6h-5z" fill="#cfcfe2" stroke="#000" stroke-width="1.100"/><path d="M3 -10v18M-7 3h4M-5.500 -11.500h8M4.500 -8v13M-4 12.500h6M-6 6l2 5" stroke="#000" stroke-width="1" fill="none"/><path d="M-1 -13.500h3v1.500h-3zM2 8h2.500v3h-2.500z" fill="#000"/><rect x="-10.5" y="-5" width="4" height="7" fill="#b9b9e6" stroke="#000" stroke-width=".7"/><rect x="-10" y="2" width="3.5" height="4" fill="#111"/></g><g transform="translate(897.5 485.7)"><path d="M-.500 30.500h18l-.500 15h-18.500z" fill="#7a7a82" stroke="#000" stroke-width="1.200"/><path d="M-1 39.500l17.800 1.500" stroke="#000" stroke-width=".8"/><path d="M16.500 2l3 2.500 0 8 .800 8-1.800 11-2.500 1.500z" fill="#26262c" stroke="#000" stroke-width=".8"/><path d="M17.500 13l2.300 .300-.300 11-2.300-.300z" fill="#b4b4b0"/><path d="M-.300 12.500l3 .300-.600 9.500-3.200-.400z" fill="#c9b0b0" stroke="#000" stroke-width=".6"/><path d="M2 0l15 1.400-.800 32-16.200-1.800z" fill="url(#bg)" stroke="#000" stroke-width="1.300"/><path d="M3.200 1.500l-1.500 29.500" stroke="#e8e8e4" stroke-width=".9"/><path d="M9.200 3.300q2-.300 1.800 1.300q.300 2-1.900 1.900q-1.500-.300-1.300-1.700q0-1.300 1.400-1.500z" fill="#33333a"/></g><polygon points="842.1,469.9 850.1,470.6 849.3,476.6 841.3,475.9" fill="#77778a" stroke="#000" stroke-width="1.2" stroke-linejoin="round" /><polygon points="900.1,474.8 909.1,475.5 908.3,481.5 899.3,480.8" fill="#77778a" stroke="#000" stroke-width="1.2" stroke-linejoin="round" /><polygon points="931.9,319.6 934.3,320.8 912.4,474.8 909.9,474.6" fill="#30303a" stroke="#000" stroke-width="0.8" stroke-linejoin="round" /><polygon points="867.9,281.8 936.5,287.6 909.6,476.1 840.8,471.8" fill="#c8c8dc" stroke="#000" stroke-width="1.2" stroke-linejoin="round" /><polyline points="863.4,313.3 932,319.1" fill="none" stroke="#000" stroke-width="1" /><ellipse cx="872.2" cy="283.4" rx="2.4" ry="1.8" fill="#000" stroke="none" stroke-width="1" transform="rotate(5 872.2 283.4)"/><ellipse cx="892.2" cy="285.1" rx="2.4" ry="1.8" fill="#000" stroke="none" stroke-width="1" transform="rotate(5 892.2 285.1)"/><ellipse cx="912.2" cy="286.7" rx="2.4" ry="1.8" fill="#000" stroke="none" stroke-width="1" transform="rotate(5 912.2 286.7)"/><ellipse cx="931.7" cy="288.4" rx="2.4" ry="1.8" fill="#000" stroke="none" stroke-width="1" transform="rotate(5 931.7 288.4)"/><ellipse cx="905.3" cy="281.9" rx="4.6" ry="2.6" fill="#b8b8b8" stroke="#222" stroke-width=".9"/><ellipse cx="905.3" cy="281.6" rx="2.6" ry="1.3" fill="#e4e4e4" stroke="#333" stroke-width=".6"/><polygon points="875.3,321.9 918.3,325.5 898.5,464.5 855.5,460.9" fill="#c8c8dc" stroke="#000" stroke-width="1.2" stroke-linejoin="round" /><polygon points="875.8,322.4 917.8,326 916.3,332.4 875.3,329" fill="#77778a" stroke="#000" stroke-width="0.8" stroke-linejoin="round" /><polygon points="877.8,329.2 914.3,332.3 896,461.3 859.5,458.2" fill="#c8c8dc" stroke="#000" stroke-width="0.9" stroke-linejoin="round" /><polygon points="877.4,350.4 909.4,353.1 908.4,363.1 878.4,360.4" fill="#5a635a" stroke="#000" stroke-width="1.2" stroke-linejoin="round" /><path d="M879.6 334.4Q880.1 331.4 883 331.7L909.1 333.8Q912.1 334.1 911.6 337.1L909.8 350.1Q909.4 353.1 906.4 352.8L880.3 350.7Q877.4 350.4 877.8 347.4Z" fill="#8e9a8e" stroke="#000" stroke-width="1" stroke-linejoin="round"/><polyline points="890.1,332.2 887.4,351.2 887.4,361.2" fill="none" stroke="#000" stroke-width="0.9" /><polygon points="872.8,382.4 904.8,385.1 903.8,395.1 873.8,392.4" fill="#5a635a" stroke="#000" stroke-width="1.2" stroke-linejoin="round" /><path d="M875.1 366.4Q875.5 363.4 878.5 363.7L904.5 365.8Q907.5 366.1 907.1 369.1L905.2 382.1Q904.8 385.1 901.8 384.8L875.8 382.7Q872.8 382.4 873.2 379.4Z" fill="#8e9a8e" stroke="#000" stroke-width="1" stroke-linejoin="round"/><polyline points="897.5,365.3 894.8,384.3 894.8,394.3" fill="none" stroke="#000" stroke-width="0.9" /><polygon points="867.2,421.4 899.2,424.1 898.2,434.1 868.2,431.4" fill="#5a635a" stroke="#000" stroke-width="1.2" stroke-linejoin="round" /><path d="M869.5 405.4Q869.9 402.4 872.9 402.7L899 404.8Q901.9 405.1 901.5 408.1L899.7 421.1Q899.2 424.1 896.2 423.8L870.2 421.7Q867.2 421.4 867.7 418.4Z" fill="#8e9a8e" stroke="#000" stroke-width="1" stroke-linejoin="round"/><polyline points="879.9,403.2 877.2,422.2 877.2,432.2" fill="none" stroke="#000" stroke-width="0.9" /><polygon points="862.7,453.4 894.7,456.1 893.7,462.1 863.7,459.4" fill="#5a635a" stroke="#000" stroke-width="1.2" stroke-linejoin="round" /><path d="M865 437.4Q865.4 434.4 868.4 434.7L894.4 436.8Q897.4 437.1 897 440.1L895.1 453.1Q894.7 456.1 891.7 455.8L865.7 453.7Q862.7 453.4 863.1 450.4Z" fill="#8e9a8e" stroke="#000" stroke-width="1" stroke-linejoin="round"/><polyline points="887.4,436.3 884.7,455.3 884.7,461.3" fill="none" stroke="#000" stroke-width="0.9" /><ellipse cx="869.8" cy="318.4" rx="2" ry="1.5" fill="#c8c8dc" stroke="#000" stroke-width="0.9" transform="rotate(5 869.8 318.4)"/><ellipse cx="923.8" cy="322.9" rx="2" ry="1.5" fill="#c8c8dc" stroke="#000" stroke-width="0.9" transform="rotate(5 923.8 322.9)"/><ellipse cx="863.6" cy="354.3" rx="2" ry="1.5" fill="#c8c8dc" stroke="#000" stroke-width="0.9" transform="rotate(5 863.6 354.3)"/><ellipse cx="920.1" cy="359.1" rx="2" ry="1.5" fill="#c8c8dc" stroke="#000" stroke-width="0.9" transform="rotate(5 920.1 359.1)"/><ellipse cx="858.7" cy="389.3" rx="2" ry="1.5" fill="#c8c8dc" stroke="#000" stroke-width="0.9" transform="rotate(5 858.7 389.3)"/><ellipse cx="915.2" cy="394.1" rx="2" ry="1.5" fill="#c8c8dc" stroke="#000" stroke-width="0.9" transform="rotate(5 915.2 394.1)"/><ellipse cx="853.5" cy="425.3" rx="2" ry="1.5" fill="#c8c8dc" stroke="#000" stroke-width="0.9" transform="rotate(5 853.5 425.3)"/><ellipse cx="910" cy="430.1" rx="2" ry="1.5" fill="#c8c8dc" stroke="#000" stroke-width="0.9" transform="rotate(5 910 430.1)"/><ellipse cx="849.2" cy="462.4" rx="2" ry="1.5" fill="#c8c8dc" stroke="#000" stroke-width="0.9" transform="rotate(5 849.2 462.4)"/><ellipse cx="903.2" cy="466.9" rx="2" ry="1.5" fill="#c8c8dc" stroke="#000" stroke-width="0.9" transform="rotate(5 903.2 466.9)"/><line x1="861.9" y1="466" x2="889.9" y2="468.3" stroke="#000" stroke-width="3.6" stroke-dasharray="7 1.5 4 1 9 1.2"/></g>
<g><g transform="translate(1248.4 515.3)"><path d="M-1.500 30h17.500l-.500 15.500h-18z" fill="#7a7a82" stroke="#000" stroke-width="1.200"/><path d="M-1.700 39.500l17.300 1.500" stroke="#000" stroke-width=".8"/><path d="M15.300 1.500l3.200 2.500-.300 7.500-1.500 20-2.700 2z" fill="#26262c" stroke="#000" stroke-width=".8"/><path d="M16 12.500l3.600 .500-.800 9.500-3.400-.500z" fill="#c9b0b0"/><path d="M1.500 0l14 1.400-.800 32-16.200-1.800z" fill="url(#bg)" stroke="#000" stroke-width="1.300"/><path d="M2.700 1.500l-1.500 29.500" stroke="#e8e8e4" stroke-width=".9"/><path d="M8.200 3.300q2-.300 1.800 1.300q.300 2-1.900 1.900q-1.500-.300-1.300-1.700q0-1.300 1.400-1.500z" fill="#33333a"/></g><polygon points="1246.8,616.1 1308.8,624.1 1307.3,627.5 1258.6,621.9" fill="#55584f" stroke="#000" stroke-width="1.2" stroke-linejoin="round" /><polygon points="1271.7,507.1 1321.9,511.4 1310.1,597.8 1310.1,601.1 1308.8,624.1 1246.8,616.1 1248.5,605.1 1257.5,598.5 1259.2,596.2" fill="#c8c8dc" stroke="#000" stroke-width="1.2" stroke-linejoin="round" /><polygon points="1259.8,592.2 1310.4,594.9 1310.1,599.9 1258.5,597.6" fill="#9d9db3" stroke="#000" stroke-width="0.8" stroke-linejoin="round" /><polygon points="1272.8,607.4 1280.3,608.1 1278.5,620.1 1271,619.4" fill="#55584f" stroke="#000" stroke-width="1.2" stroke-linejoin="round" /><polygon points="1312.3,606.7 1315.3,607 1314.6,612 1311.6,611.7" fill="#eee" stroke="#000" stroke-width="0.6" stroke-linejoin="round" /><polygon points="1256.9,598 1259.4,598.2 1258.5,604.2 1256,604" fill="#eee" stroke="#000" stroke-width="0.6" stroke-linejoin="round" /><polyline points="1287.9,565.2 1285.8,580.2" fill="none" stroke="#000" stroke-width="2.2" /><ellipse cx="1272.7" cy="584.6" rx="4.2" ry="3" fill="#000" stroke="none" stroke-width="1" transform="rotate(5 1272.7 584.6)"/><ellipse cx="1297.9" cy="586.8" rx="4.2" ry="3" fill="#000" stroke="none" stroke-width="1" transform="rotate(5 1297.9 586.8)"/><ellipse cx="1274.4" cy="527.1" rx="3.8" ry="2.8" fill="#000" stroke="none" stroke-width="1" transform="rotate(5 1274.4 527.1)"/><ellipse cx="1313.5" cy="530.4" rx="3.8" ry="2.8" fill="#000" stroke="none" stroke-width="1" transform="rotate(5 1313.5 530.4)"/><g transform="translate(1293.8 534.3) scale(1.12)"><path d="M-6 -14h9q3 0 3 3v16q0 3-3 4l-3 4h-5l-2-4q-2-1-2-4v-16q0-3 3-3z" fill="#c8c8dc" stroke="#000" stroke-width="1.500"/><path d="M-4 -9h6v11h-6zM-2 5h5v6h-5z" fill="#cfcfe2" stroke="#000" stroke-width="1.100"/><path d="M3 -10v18M-7 3h4M-5.500 -11.500h8M4.500 -8v13M-4 12.500h6M-6 6l2 5" stroke="#000" stroke-width="1" fill="none"/><path d="M-1 -13.500h3v1.500h-3zM2 8h2.500v3h-2.500z" fill="#000"/><rect x="-10.5" y="-5" width="4" height="7" fill="#b9b9e6" stroke="#000" stroke-width=".7"/><rect x="-10" y="2" width="3.5" height="4" fill="#111"/></g><g transform="translate(1319.4 521.3)"><path d="M-.500 30.500h18l-.500 15h-18.500z" fill="#7a7a82" stroke="#000" stroke-width="1.200"/><path d="M-1 39.500l17.800 1.500" stroke="#000" stroke-width=".8"/><path d="M16.500 2l3 2.500 0 8 .800 8-1.800 11-2.500 1.500z" fill="#26262c" stroke="#000" stroke-width=".8"/><path d="M17.500 13l2.300 .300-.300 11-2.300-.300z" fill="#b4b4b0"/><path d="M-.300 12.500l3 .300-.600 9.500-3.200-.400z" fill="#c9b0b0" stroke="#000" stroke-width=".6"/><path d="M2 0l15 1.400-.800 32-16.200-1.800z" fill="url(#bg)" stroke="#000" stroke-width="1.300"/><path d="M3.200 1.500l-1.500 29.500" stroke="#e8e8e4" stroke-width=".9"/><path d="M9.200 3.300q2-.300 1.800 1.300q.300 2-1.900 1.900q-1.500-.300-1.300-1.700q0-1.300 1.400-1.500z" fill="#33333a"/></g><polygon points="1264,505.5 1272,506.2 1271.2,512.2 1263.2,511.5" fill="#77778a" stroke="#000" stroke-width="1.2" stroke-linejoin="round" /><polygon points="1322,510.4 1331,511.1 1330.2,517.1 1321.2,516.4" fill="#77778a" stroke="#000" stroke-width="1.2" stroke-linejoin="round" /><polygon points="1353.8,355.2 1356.2,356.4 1334.3,510.4 1331.8,510.2" fill="#30303a" stroke="#000" stroke-width="0.8" stroke-linejoin="round" /><polygon points="1289.8,317.4 1358.4,323.2 1331.5,511.7 1262.7,507.4" fill="#c8c8dc" stroke="#000" stroke-width="1.2" stroke-linejoin="round" /><polyline points="1285.3,348.9 1353.9,354.7" fill="none" stroke="#000" stroke-width="1" /><ellipse cx="1294.1" cy="319" rx="2.4" ry="1.8" fill="#000" stroke="none" stroke-width="1" transform="rotate(5 1294.1 319)"/><ellipse cx="1314.1" cy="320.7" rx="2.4" ry="1.8" fill="#000" stroke="none" stroke-width="1" transform="rotate(5 1314.1 320.7)"/><ellipse cx="1334.1" cy="322.3" rx="2.4" ry="1.8" fill="#000" stroke="none" stroke-width="1" transform="rotate(5 1334.1 322.3)"/><ellipse cx="1353.6" cy="324" rx="2.4" ry="1.8" fill="#000" stroke="none" stroke-width="1" transform="rotate(5 1353.6 324)"/><ellipse cx="1327.2" cy="317.5" rx="4.6" ry="2.6" fill="#b8b8b8" stroke="#222" stroke-width=".9"/><ellipse cx="1327.2" cy="317.2" rx="2.6" ry="1.3" fill="#e4e4e4" stroke="#333" stroke-width=".6"/><polygon points="1297.2,357.5 1340.2,361.1 1320.4,500.1 1277.4,496.5" fill="#c8c8dc" stroke="#000" stroke-width="1.2" stroke-linejoin="round" /><polygon points="1297.7,358 1339.7,361.6 1338.2,368 1297.2,364.6" fill="#77778a" stroke="#000" stroke-width="0.8" stroke-linejoin="round" /><polygon points="1299.7,364.8 1336.2,367.9 1317.9,496.9 1281.4,493.8" fill="#c8c8dc" stroke="#000" stroke-width="0.9" stroke-linejoin="round" /><polygon points="1299.2,386.5 1331.7,389.2 1330.7,395.7 1300.2,393" fill="#77778a" stroke="#000" stroke-width="1.2" stroke-linejoin="round" /><path d="M1301.5 370Q1302 367 1304.9 367.3L1331.5 369.5Q1334.5 369.7 1334 372.7L1332.1 386.3Q1331.7 389.2 1328.7 389L1302.2 386.8Q1299.2 386.5 1299.6 383.5Z" fill="#c8c8dc" stroke="#000" stroke-width="1" stroke-linejoin="round"/><ellipse cx="1307.8" cy="375.6" rx="1.3" ry="1" fill="#000" stroke="none" stroke-width="1" transform="rotate(5 1307.8 375.6)"/><ellipse cx="1325.8" cy="377.1" rx="1.3" ry="1" fill="#000" stroke="none" stroke-width="1" transform="rotate(5 1325.8 377.1)"/><polygon points="1294.6,418.5 1327.1,421.2 1326.1,427.7 1295.6,425" fill="#77778a" stroke="#000" stroke-width="1.2" stroke-linejoin="round" /><path d="M1297 402Q1297.4 399 1300.4 399.3L1326.9 401.5Q1329.9 401.7 1329.5 404.7L1327.5 418.3Q1327.1 421.2 1324.1 421L1297.6 418.8Q1294.6 418.5 1295 415.5Z" fill="#c8c8dc" stroke="#000" stroke-width="1" stroke-linejoin="round"/><ellipse cx="1303.3" cy="407.6" rx="1.3" ry="1" fill="#000" stroke="none" stroke-width="1" transform="rotate(5 1303.3 407.6)"/><ellipse cx="1321.3" cy="409.1" rx="1.3" ry="1" fill="#000" stroke="none" stroke-width="1" transform="rotate(5 1321.3 409.1)"/><polygon points="1289.1,457.5 1321.6,460.2 1320.6,466.7 1290.1,464" fill="#77778a" stroke="#000" stroke-width="1.2" stroke-linejoin="round" /><path d="M1291.4 441Q1291.8 438 1294.8 438.3L1321.4 440.5Q1324.3 440.7 1323.9 443.7L1322 457.3Q1321.6 460.2 1318.6 460L1292.1 457.8Q1289.1 457.5 1289.5 454.5Z" fill="#c8c8dc" stroke="#000" stroke-width="1" stroke-linejoin="round"/><ellipse cx="1297.7" cy="446.6" rx="1.3" ry="1" fill="#000" stroke="none" stroke-width="1" transform="rotate(5 1297.7 446.6)"/><ellipse cx="1315.7" cy="448.1" rx="1.3" ry="1" fill="#000" stroke="none" stroke-width="1" transform="rotate(5 1315.7 448.1)"/><polygon points="1284.5,489.5 1317,492.2 1316,496.1 1285.5,493.4" fill="#77778a" stroke="#000" stroke-width="1.2" stroke-linejoin="round" /><path d="M1286.9 473Q1287.3 470 1290.3 470.3L1316.8 472.5Q1319.8 472.7 1319.4 475.7L1317.4 489.3Q1317 492.2 1314 492L1287.5 489.8Q1284.5 489.5 1284.9 486.5Z" fill="#c8c8dc" stroke="#000" stroke-width="1" stroke-linejoin="round"/><ellipse cx="1293.1" cy="478.6" rx="1.3" ry="1" fill="#000" stroke="none" stroke-width="1" transform="rotate(5 1293.1 478.6)"/><ellipse cx="1311.1" cy="480.1" rx="1.3" ry="1" fill="#000" stroke="none" stroke-width="1" transform="rotate(5 1311.1 480.1)"/><ellipse cx="1291.7" cy="354" rx="2" ry="1.5" fill="#c8c8dc" stroke="#000" stroke-width="0.9" transform="rotate(5 1291.7 354)"/><ellipse cx="1345.7" cy="358.5" rx="2" ry="1.5" fill="#c8c8dc" stroke="#000" stroke-width="0.9" transform="rotate(5 1345.7 358.5)"/><ellipse cx="1285.5" cy="389.9" rx="2" ry="1.5" fill="#c8c8dc" stroke="#000" stroke-width="0.9" transform="rotate(5 1285.5 389.9)"/><ellipse cx="1342" cy="394.7" rx="2" ry="1.5" fill="#c8c8dc" stroke="#000" stroke-width="0.9" transform="rotate(5 1342 394.7)"/><ellipse cx="1280.6" cy="424.9" rx="2" ry="1.5" fill="#c8c8dc" stroke="#000" stroke-width="0.9" transform="rotate(5 1280.6 424.9)"/><ellipse cx="1337.1" cy="429.7" rx="2" ry="1.5" fill="#c8c8dc" stroke="#000" stroke-width="0.9" transform="rotate(5 1337.1 429.7)"/><ellipse cx="1275.4" cy="460.9" rx="2" ry="1.5" fill="#c8c8dc" stroke="#000" stroke-width="0.9" transform="rotate(5 1275.4 460.9)"/><ellipse cx="1331.9" cy="465.7" rx="2" ry="1.5" fill="#c8c8dc" stroke="#000" stroke-width="0.9" transform="rotate(5 1331.9 465.7)"/><ellipse cx="1271.1" cy="498" rx="2" ry="1.5" fill="#c8c8dc" stroke="#000" stroke-width="0.9" transform="rotate(5 1271.1 498)"/><ellipse cx="1325.1" cy="502.5" rx="2" ry="1.5" fill="#c8c8dc" stroke="#000" stroke-width="0.9" transform="rotate(5 1325.1 502.5)"/><line x1="1283.8" y1="501.6" x2="1311.8" y2="503.9" stroke="#000" stroke-width="3.6" stroke-dasharray="7 1.5 4 1 9 1.2"/></g>
<rect x="908.5" y="338.5" width="12.5" height="12.5" fill="none" stroke="#fff" stroke-width="2"/><rect x="912.5" y="343" width="4.5" height="4.5" fill="#fff"/>
</g>
<circle cx="1437.5" cy="363" r="3.2" fill="#3a3a3a"/><path d="M1437.3 361L1437.3 336" stroke="#10a010" stroke-width="2.6"/><path d="M1433.5 338l3.8-10 3.8 10z" fill="#0a930a"/><path d="M1437.6 360L1443.5 322" stroke="#12a6b8" stroke-width="2.4"/><path d="M1440 322.5l4.8-9 2.6 10z" fill="#1497ab"/><text x="1432.3" y="326" font-size="11.5" fill="#a8a8a8" font-family="Liberation Sans, sans-serif">Y</text><text x="1439.6" y="312.4" font-size="12" fill="#ff1a1a" font-family="Liberation Sans, sans-serif">Z</text><g><path d="M95 921.400L118.700 923L118.700 940L94 938Z" fill="#8a9872"/><path d="M94 938L95 921.400L118.700 923" fill="none" stroke="#f4ee10" stroke-width="1.200"/><path d="M119 942L93 940" stroke="#e81010" stroke-width="2.600"/><path d="M95.500 935.800L85.200 939.400L95 943.800Z" fill="#f01818"/><path d="M120.200 940L127 893" stroke="#20d0e0" stroke-width="1.600"/><path d="M123.200 897.500L127.600 890.600L130.600 898.500Z" fill="#18b8c8"/><path d="M120.300 940V913" stroke="#0a9a0a" stroke-width="2.800"/><path d="M116.400 915.500L120.700 905.800L125 915.500Z" fill="#10b010"/><circle cx="119.800" cy="942" r="3.700" fill="#6a6a6a"/><circle cx="118.800" cy="941" r="1.500" fill="#9a9a9a"/></g><text x="73.500" y="943.300" font-size="11.500" fill="#ff2020" font-family="Liberation Sans, sans-serif">X</text><text x="116.500" y="904.800" font-size="11.500" fill="#c4c4c4" font-family="Liberation Sans, sans-serif">Y</text><text x="123.800" y="890.200" font-size="12" fill="#ff1a1a" font-family="Liberation Sans, sans-serif">Z</text>
<defs><linearGradient id="wm" gradientUnits="userSpaceOnUse" x1="0" x2="0" y1="508" y2="540"><stop offset="0" stop-color="#f28a22"/><stop offset=".6" stop-color="#ee7a24"/><stop offset="1" stop-color="#f6a81c"/></linearGradient><linearGradient id="wm2" gradientUnits="userSpaceOnUse" x1="904" x2="922" y1="514" y2="534"><stop offset="0" stop-color="#f8b818"/><stop offset="1" stop-color="#ec6a26"/></linearGradient></defs><g fill="url(#wm)"><path d="M891.3 517.6l2.400-.8v20.700h-2.400z"/><path d="M895 509.500l3-1.500v25q0 2.500 3 4h-3.500q-2.500-1.500-2.500-4z"/><path d="M899.600 512l2.600-1.300v18q0 4 5 8.300h-3q-4.600-3.500-4.600-8z"/><path d="M928.300 509.300l-3.300-1.500v22q0 4-6 7.200h3.500q5.800-3 5.800-7.500z"/><path d="M932.600 513l-3-1.300v21.500q0 2.500-3 3.800h3.500q2.500-1.300 2.500-3.800z"/><path d="M936.700 517.600l-2.600-.8v20.700h2.600z"/><path d="M891.300 537.600h45.400v2.400h-45.400z"/></g><path d="M916.500 512.300a10.200 10.200 0 1 0 6.800 9.200a5.600 5.600 0 1 1-8.300-4.300q-.8-2.500 1.500-4.900z" fill="url(#wm2)"/><text x="946.200" y="529.300" font-size="17.200" font-weight="500" fill="#f28c24" font-family="Liberation Sans, Noto Sans CJK SC, sans-serif" textLength="83" lengthAdjust="spacingAndGlyphs">智造资料网</text><text x="946.800" y="538" font-size="4.700" font-weight="bold" font-style="italic" fill="#ee8a2a" font-family="Liberation Sans, sans-serif" textLength="82" lengthAdjust="spacingAndGlyphs">INTELLIGENT MANUFACTURING DATA</text>
</svg>
<div class="a" style="left:64px;top:113px;width:24px;height:24px;background:rgba(150,153,172,.87)"><svg width="24" height="24" viewBox="0 0 24 24" style="position:absolute;left:0;top:0"><rect x="3" y="4" width="18" height="4" rx=".8" fill="#3d5a92"/><rect x="3" y="10" width="18" height="4" rx=".8" fill="#3d5a92"/><rect x="3" y="16" width="18" height="4" rx=".8" fill="#3d5a92"/></svg></div>
<div class="a" style="left:92px;top:113px;width:24px;height:24px;background:rgba(150,153,172,.87)"><svg width="24" height="24" viewBox="0 0 24 24" style="position:absolute;left:0;top:0"><rect x="6.500" y="6.500" width="11" height="11" fill="#e6ecf8" stroke="#cfd6e6" stroke-width="1"/><path d="M3 3l4 4M21 3l-4 4M3 21l4-4M21 21l-4-4" stroke="#2fcc22" stroke-width="2.200"/></svg></div>
<div class="a" style="left:120px;top:113px;width:24px;height:24px;background:rgba(150,153,172,.87)"><svg width="24" height="24" viewBox="0 0 24 24" style="position:absolute;left:0;top:0"><g transform="translate(2 2)"><circle cx="7" cy="7.500" r="4.500" fill="none" stroke="#c8ccd8" stroke-width="1"/><circle cx="9.500" cy="8" r="5" fill="none" stroke="#c8ccd8" stroke-width="1"/><circle cx="12.5" cy="8.5" r="5.5" fill="#cfe2f6" stroke="#7c8590" stroke-width="1.600"/><path d="M8.54 12.46l-5.225 5.225" stroke="#8b8b8b" stroke-width="2.600" stroke-linecap="round"/></g></svg></div>
<div class="a" style="left:148px;top:113px;width:24px;height:24px;background:rgba(150,153,172,.87)"><svg width="24" height="24" viewBox="0 0 24 24" style="position:absolute;left:0;top:0"><path d="M3 15l9-4 9 4-9 5z" fill="none" stroke="#555a70" stroke-width=".8"/><path d="M11 14v-10" stroke="#2a6ae0" stroke-width="1.800"/><path d="M11 1l-2.800 4.500h5.600z" fill="#2a6ae0"/><path d="M11 14l-6 5" stroke="#22b022" stroke-width="1.600"/><path d="M11 14l8 5" stroke="#e02020" stroke-width="1.600"/><path d="M20.500 20l-4-.500 2-3z" fill="#e02020"/><circle cx="11" cy="14" r="1.500" fill="#eee"/></svg></div>
<div class="a" style="left:176px;top:113px;width:24px;height:24px;background:rgba(150,153,172,.87)"><svg width="24" height="24" viewBox="0 0 24 24" style="position:absolute;left:0;top:0"><defs><linearGradient id="gc0" x1="0" x2="1" y1="0" y2="1"><stop offset="0" stop-color="#8cf060"/><stop offset="1" stop-color="#1fae10"/></linearGradient></defs><path d="M3.3 7.3 L12.5 3 L21.7 7.3 L21.7 16.8 L12.5 21.6 L3.3 16.8 Z M3.3 7.3 L21.7 16.8 M12.5 3 L12.5 21.6 M21.7 7.3 L3.3 16.8" fill="none" stroke="#000" stroke-width="1.300" stroke-linejoin="round"/><path d="M3.3 7.3L12.5 3L21.7 7.3L12.5 12.2 Z" fill="url(#gc0)" stroke="#1d9a0a" stroke-width=".7"/></svg></div>
<div class="a" style="left:204px;top:113px;width:24px;height:24px;background:rgba(150,153,172,.87)"><svg width="24" height="24" viewBox="0 0 24 24" style="position:absolute;left:0;top:0"><defs><linearGradient id="gc1" x1="0" x2="1" y1="0" y2="1"><stop offset="0" stop-color="#8cf060"/><stop offset="1" stop-color="#1fae10"/></linearGradient></defs><path d="M3.3 7.3 L12.5 3 L21.7 7.3 L21.7 16.8 L12.5 21.6 L3.3 16.8 Z M3.3 7.3 L21.7 16.8 M12.5 3 L12.5 21.6 M21.7 7.3 L3.3 16.8" fill="none" stroke="#000" stroke-width="1.300" stroke-linejoin="round"/><path d="M3.3 16.8L12.5 12.2L21.7 16.8L12.5 21.6 Z" fill="url(#gc1)" stroke="#1d9a0a" stroke-width=".7"/></svg></div>
<div class="a" style="left:232px;top:113px;width:24px;height:24px;background:rgba(150,153,172,.87)"><svg width="24" height="24" viewBox="0 0 24 24" style="position:absolute;left:0;top:0"><defs><linearGradient id="gc2" x1="0" x2="1" y1="0" y2="1"><stop offset="0" stop-color="#8cf060"/><stop offset="1" stop-color="#1fae10"/></linearGradient></defs><path d="M3.3 7.3 L12.5 3 L21.7 7.3 L21.7 16.8 L12.5 21.6 L3.3 16.8 Z M3.3 7.3 L21.7 16.8 M12.5 3 L12.5 21.6 M21.7 7.3 L3.3 16.8" fill="none" stroke="#000" stroke-width="1.300" stroke-linejoin="round"/><path d="M3.3 7.3L12.5 3L12.5 12.2L3.3 16.8 Z" fill="url(#gc2)" stroke="#1d9a0a" stroke-width=".7"/></svg></div>
<div class="a" style="left:260px;top:113px;width:24px;height:24px;background:rgba(150,153,172,.87)"><svg width="24" height="24" viewBox="0 0 24 24" style="position:absolute;left:0;top:0"><defs><linearGradient id="gc3" x1="0" x2="1" y1="0" y2="1"><stop offset="0" stop-color="#8cf060"/><stop offset="1" stop-color="#1fae10"/></linearGradient></defs><path d="M3.3 7.3 L12.5 3 L21.7 7.3 L21.7 16.8 L12.5 21.6 L3.3 16.8 Z M3.3 7.3 L21.7 16.8 M12.5 3 L12.5 21.6 M21.7 7.3 L3.3 16.8" fill="none" stroke="#000" stroke-width="1.300" stroke-linejoin="round"/><path d="M12.5 12.2L21.7 7.3L21.7 16.8L12.5 21.6 Z" fill="url(#gc3)" stroke="#1d9a0a" stroke-width=".7"/></svg></div>
<div class="a" style="left:288px;top:113px;width:24px;height:24px;background:rgba(150,153,172,.87)"><svg width="24" height="24" viewBox="0 0 24 24" style="position:absolute;left:0;top:0"><defs><linearGradient id="gc4" x1="0" x2="1" y1="0" y2="1"><stop offset="0" stop-color="#8cf060"/><stop offset="1" stop-color="#1fae10"/></linearGradient></defs><path d="M3.3 7.3 L12.5 3 L21.7 7.3 L21.7 16.8 L12.5 21.6 L3.3 16.8 Z M3.3 7.3 L21.7 16.8 M12.5 3 L12.5 21.6 M21.7 7.3 L3.3 16.8" fill="none" stroke="#000" stroke-width="1.300" stroke-linejoin="round"/><path d="M3.3 7.3L12.5 12.2L12.5 21.6L3.3 16.8 Z" fill="url(#gc4)" stroke="#1d9a0a" stroke-width=".7"/></svg></div>
<div class="a" style="left:316px;top:113px;width:24px;height:24px;background:rgba(150,153,172,.87)"><svg width="24" height="24" viewBox="0 0 24 24" style="position:absolute;left:0;top:0"><defs><linearGradient id="gc5" x1="0" x2="1" y1="0" y2="1"><stop offset="0" stop-color="#8cf060"/><stop offset="1" stop-color="#1fae10"/></linearGradient></defs><path d="M3.3 7.3 L12.5 3 L21.7 7.3 L21.7 16.8 L12.5 21.6 L3.3 16.8 Z M3.3 7.3 L21.7 16.8 M12.5 3 L12.5 21.6 M21.7 7.3 L3.3 16.8" fill="none" stroke="#000" stroke-width="1.300" stroke-linejoin="round"/><path d="M12.5 3L21.7 7.3L21.7 16.8L12.5 12.2 Z" fill="url(#gc5)" stroke="#1d9a0a" stroke-width=".7"/></svg></div>
<div class="a" style="left:344px;top:113px;width:24px;height:24px;background:rgba(150,153,172,.87)"><svg width="24" height="24" viewBox="0 0 24 24" style="position:absolute;left:0;top:0"><defs><linearGradient id="gc6" x1="0" x2="1" y1="0" y2="1"><stop offset="0" stop-color="#8cf060"/><stop offset="1" stop-color="#1fae10"/></linearGradient></defs><path d="M3.3 7.3L12.5 3L21.7 7.3L12.5 12.2 Z" fill="#4fdc2c" stroke="#1d9a0a" stroke-width=".7"/><path d="M3.3 7.3L12.5 12.2L12.5 21.6L3.3 16.8 Z" fill="#2fbf14" stroke="#1d9a0a" stroke-width=".7"/><path d="M12.5 12.2L21.7 7.3L21.7 16.8L12.5 21.6 Z" fill="#7be858" stroke="#1d9a0a" stroke-width=".7"/></svg></div>
<div class="a" style="left:64px;top:141px;width:24px;height:24px;background:rgba(150,153,172,.87)"><svg width="24" height="24" viewBox="0 0 24 24" style="position:absolute;left:0;top:0"><g opacity="1"><path d="M8.5 6.2v12.6a5.0 2.2 0 0 0 10 0v-12.6" fill="none" stroke="#111" stroke-width="0.9"/><ellipse cx="13.5" cy="6.2" rx="5.0" ry="2.2" fill="none" stroke="#111" stroke-width="0.9"/></g></svg></div>
<div class="a" style="left:64px;top:169px;width:24px;height:24px;background:rgba(150,153,172,.87)"><svg width="24" height="24" viewBox="0 0 24 24" style="position:absolute;left:0;top:0"><g opacity="1"><path d="M8.5 6.2v12.6a5.0 2.2 0 0 0 10 0v-12.6" fill="none" stroke="#111" stroke-width="0.9"/><ellipse cx="13.5" cy="6.2" rx="5.0" ry="2.2" fill="none" stroke="#111" stroke-width="0.9"/></g></svg></div>
<div class="a" style="left:64px;top:197px;width:24px;height:24px;background:#cdb876;box-shadow:inset 0 0 0 1px #e8c860"><svg width="24" height="24" viewBox="0 0 24 24" style="position:absolute;left:0;top:0"><defs><linearGradient id="cb" x1="0" x2="1" y1="0" y2="0"><stop offset="0" stop-color="#3a68c0"/><stop offset=".55" stop-color="#8fb8f0"/><stop offset="1" stop-color="#3a68c0"/></linearGradient></defs><g opacity="1"><path d="M8.5 6.2v12.6a5.0 2.2 0 0 0 10 0v-12.6" fill="url(#cb)" stroke="#0e1e50" stroke-width="1"/><ellipse cx="13.5" cy="6.2" rx="5.0" ry="2.2" fill="#6f9be0" stroke="#0e1e50" stroke-width="1"/></g></svg></div>
<div class="a" style="left:64px;top:225px;width:24px;height:24px;background:rgba(150,153,172,.87)"><svg width="24" height="24" viewBox="0 0 24 24" style="position:absolute;left:0;top:0"><g opacity="1"><path d="M8.5 6.2v12.6a5.0 2.2 0 0 0 10 0v-12.6" fill="#dfe8f6" stroke="#778" stroke-width="0.9"/><ellipse cx="13.5" cy="6.2" rx="5.0" ry="2.2" fill="#f4f7fc" stroke="#778" stroke-width="0.9"/></g></svg></div>
<div class="a" style="left:64px;top:253px;width:24px;height:24px;background:rgba(150,153,172,.87)"><svg width="24" height="24" viewBox="0 0 24 24" style="position:absolute;left:0;top:0"><g opacity="1"><path d="M8.5 6.2v12.6a5.0 2.2 0 0 0 10 0v-12.6" fill="none" stroke="#111" stroke-width="0.9"/><ellipse cx="13.5" cy="6.2" rx="5.0" ry="2.2" fill="none" stroke="#111" stroke-width="0.9"/></g><path d="M10.500 7l3 12M16.500 7l-3 12M12 7l4 12M10 12l7 5" stroke="#111" stroke-width=".6" fill="none"/></svg></div>
<div class="a" style="left:2px;top:1020px;width:1916px;height:1px;background:#a4a7b0"></div>
<div class="a" style="left:1337px;top:1003px;width:3px;height:16px;background:repeating-linear-gradient(180deg,#f6f7fb 0 2px,#a9aebd 2px 3px,#d6dbe9 3px 4px)"></div>
<div class="a" style="left:1341px;top:1003px;width:131px;height:15px;background:#fff"></div>
<svg class="a" style="left:1460px;top:1004px" width="14" height="14" viewBox="0 0 14 14" ><circle cx="8" cy="5.500" r="4" fill="#e8f0fc" stroke="#3a6ab8" stroke-width="1.300"/><path d="M5 8.500l-4 4.500" stroke="#3a6ab8" stroke-width="1.800"/></svg>
<div class="a" style="left:1475px;top:1003px;width:3px;height:16px;background:repeating-linear-gradient(180deg,#f6f7fb 0 2px,#a9aebd 2px 3px,#d6dbe9 3px 4px)"></div>
<div class="t" style="left:1486px;top:1004px;letter-spacing:.05px">绝对 XY 上视图</div>
<div class="a" style="left:1591px;top:1003px;width:1px;height:16px;background:#9ea3b3"></div><div class="a" style="left:1592px;top:1003px;width:1px;height:16px;background:#f4f6fb"></div>
<div class="t" style="left:1601px;top:1004px;">绝对视图</div>
<div class="a" style="left:1656px;top:1003px;width:3px;height:16px;background:repeating-linear-gradient(180deg,#f6f7fb 0 2px,#a9aebd 2px 3px,#d6dbe9 3px 4px)"></div>
<div class="t" style="left:1668px;top:1004px;font-weight:bold;font-size:12px">LAYER0</div>
<div class="a" style="left:1726px;top:1003px;width:1px;height:16px;background:#9ea3b3"></div><div class="a" style="left:1727px;top:1003px;width:1px;height:16px;background:#f4f6fb"></div>
<div class="a" style="left:1757px;top:1003px;width:1px;height:16px;background:#9ea3b3"></div><div class="a" style="left:1758px;top:1003px;width:1px;height:16px;background:#f4f6fb"></div>
<div class="a" style="left:1762px;top:1005px;width:32px;height:12px;background:#44628b"></div>
<div class="a" style="left:1805px;top:1005px;width:32px;height:12px;background:#44628b"></div>
<div class="a" style="left:1848px;top:1005px;width:32px;height:12px;background:#44628b"></div>
<div class="a" style="left:1800px;top:1003px;width:1px;height:16px;background:#9ea3b3"></div><div class="a" style="left:1801px;top:1003px;width:1px;height:16px;background:#f4f6fb"></div>
<div class="a" style="left:1843px;top:1003px;width:1px;height:16px;background:#9ea3b3"></div><div class="a" style="left:1844px;top:1003px;width:1px;height:16px;background:#f4f6fb"></div>
<div class="a" style="left:1886px;top:1003px;width:1px;height:16px;background:#9ea3b3"></div><div class="a" style="left:1887px;top:1003px;width:1px;height:16px;background:#f4f6fb"></div>
<svg class="a" style="left:1893px;top:1002px" width="15" height="15" viewBox="0 0 15 15" ><circle cx="7.500" cy="7.500" r="6.500" fill="#1f3fa8" stroke="#10205a" stroke-width=".8"/><path d="M3 5q2-3 5-2.500l1 2.500-2 1.500-1 3-2-1zM9 8l3-1 1.500 2-2 3.500-2-1.500z" fill="#2fbb22"/><path d="M4 3q2-1.500 4-1" stroke="#cfe0ff" stroke-width=".8" fill="none"/></svg>
<div class="a" style="left:1132px;top:1023px;width:1px;height:15px;background:#9ea3b3"></div><div class="a" style="left:1133px;top:1023px;width:1px;height:15px;background:#f4f6fb"></div>
<div class="t" style="left:1141px;top:1025px;">拴牢</div>
<div class="a" style="left:1174px;top:1023px;width:1px;height:15px;background:#9ea3b3"></div><div class="a" style="left:1175px;top:1023px;width:1px;height:15px;background:#f4f6fb"></div>
<svg class="a" style="left:1182px;top:1022px" width="18" height="17" viewBox="0 0 18 17" ><rect x=".500" y=".500" width="17" height="16" fill="#e8b8bc" stroke="#b8888c"/><rect x="3.500" y="3.500" width="11" height="10" fill="#f4dadc" stroke="#c03040" stroke-width="1.200"/><path d="M6 9a3 3 0 0 1 5-2l1-1v3h-3l1-1a1.800 1.800 0 0 0-3 1zM12 8.500a3 3 0 0 1-5 2l-1 1v-3h3l-1 1a1.800 1.800 0 0 0 3-1z" fill="#d03848"/></svg>
<div class="a" style="left:1205px;top:1023px;width:1px;height:15px;background:#9ea3b3"></div><div class="a" style="left:1206px;top:1023px;width:1px;height:15px;background:#f4f6fb"></div>
<svg class="a" style="left:1212px;top:1022px" width="18" height="17" viewBox="0 0 18 17" ><rect x=".500" y=".500" width="17" height="16" fill="#fbd96a" stroke="#e6b93c"/><path d="M4 4l5 1 1 5-3 1z" fill="#c890d8" stroke="#7a4a8a" stroke-width=".6"/><path d="M8 8l7 7" stroke="#e8a030" stroke-width="2"/><path d="M3 2l1 2M6 1v2M2 6l2 .500" stroke="#d03848" stroke-width="1"/></svg>
<div class="a" style="left:1236px;top:1023px;width:1px;height:15px;background:#9ea3b3"></div><div class="a" style="left:1237px;top:1023px;width:1px;height:15px;background:#f4f6fb"></div>
<svg class="a" style="left:1243px;top:1022px" width="18" height="17" viewBox="0 0 18 17" ><path d="M3 7l6-4 7 3-2 3v6h-9v-6z" fill="#e8a858" stroke="#8a5a20" stroke-width=".8"/><path d="M9 3l7 3-6 2-7-1z" fill="#f6d090" stroke="#8a5a20" stroke-width=".6"/><rect x="6" y="10" width="5" height="5" fill="#6fa6e8" stroke="#2a5ad0" stroke-width=".6" stroke-dasharray="1.500 1"/></svg>
<div class="a" style="left:1267px;top:1023px;width:1px;height:15px;background:#9ea3b3"></div><div class="a" style="left:1268px;top:1023px;width:1px;height:15px;background:#f4f6fb"></div>
<svg class="a" style="left:1275px;top:1021px" width="16" height="19" viewBox="0 0 16 19" ><text x="8" y="15.500" font-size="18" font-weight="bold" text-anchor="middle" font-family="Liberation Sans, sans-serif" fill="#3a6fd0" stroke="#1d3f8a" stroke-width=".5">?</text><ellipse cx="8" cy="17.500" rx="5" ry="1.200" fill="#9aa0b4" opacity=".6"/></svg>
<div class="a" style="left:1297px;top:1023px;width:1px;height:15px;background:#9ea3b3"></div><div class="a" style="left:1298px;top:1023px;width:1px;height:15px;background:#f4f6fb"></div>
<svg class="a" style="left:1304px;top:1022px" width="20" height="17" viewBox="0 0 20 17" ><path d="M7 3l5-2 5 2v5l-5 2.500-5-2z" fill="#5c96ec" stroke="#1d3f8a" stroke-width=".7"/><path d="M7 3l5 2 5-2M12 5v5.500" fill="none" stroke="#1d3f8a" stroke-width=".7"/><path d="M10 10l4-1.500 4 1.500v4l-4 2-4-2z" fill="#5fb8c8" stroke="#1d5a6a" stroke-width=".7"/><path d="M1 9l8 3M2 14l7-2M5 6l4 6" stroke="#e02020" stroke-width="1.500"/></svg>
<div class="a" style="left:1328px;top:1023px;width:1px;height:15px;background:#9ea3b3"></div><div class="a" style="left:1329px;top:1023px;width:1px;height:15px;background:#f4f6fb"></div>
<svg class="a" style="left:1335px;top:1022px" width="20" height="17" viewBox="0 0 20 17" ><rect x=".500" y=".500" width="19" height="16" fill="#fbd96a" stroke="#e6b93c"/><path d="M3 6l7-3 7 3v7l-7 3-7-3z" fill="#3fa8d8" stroke="#1d3f8a" stroke-width=".8"/><path d="M3 6l7 3 7-3-7-3z" fill="#e060d0" stroke="#1d3f8a" stroke-width=".7"/><path d="M10 9v7" stroke="#1d3f8a" stroke-width=".8"/></svg>
<div class="a" style="left:1360px;top:1023px;width:1px;height:15px;background:#9ea3b3"></div><div class="a" style="left:1361px;top:1023px;width:1px;height:15px;background:#f4f6fb"></div>
<svg class="a" style="left:1366px;top:1022px" width="18" height="17" viewBox="0 0 18 17" ><rect x="3" y="8" width="11" height="8" fill="#f4f6fb" stroke="#555" stroke-width="1"/></svg>
<div class="a" style="left:1428px;top:1023px;width:1px;height:15px;background:#9ea3b3"></div><div class="a" style="left:1429px;top:1023px;width:1px;height:15px;background:#f4f6fb"></div>
<svg class="a" style="left:1432px;top:1022px" width="18" height="17" viewBox="0 0 18 17" ><rect x="1" y="4" width="14" height="12" fill="#f4f6fb" stroke="#334a7a" stroke-width="1"/><path d="M8 4v12M1 10h14" stroke="#334a7a" stroke-width="1"/></svg>
<div class="t" style="left:1463px;top:1025px;">LS: 1.00 PS: 1.00</div>
<div class="a" style="left:1580px;top:1023px;width:1px;height:15px;background:#9ea3b3"></div><div class="a" style="left:1581px;top:1023px;width:1px;height:15px;background:#f4f6fb"></div>
<div class="t" style="left:1588px;top:1025px;">单位: 毫米</div>
<div class="a" style="left:1654px;top:1023px;width:1px;height:15px;background:#9ea3b3"></div><div class="a" style="left:1655px;top:1023px;width:1px;height:15px;background:#f4f6fb"></div>
<div class="t" style="left:1663px;top:1025px;letter-spacing:.38px">X = 1038.500</div>
<div class="t" style="left:1743.7px;top:1025px;letter-spacing:.38px">Y = 0047.488</div>
<div class="t" style="left:1824px;top:1025px;color:#f01818;letter-spacing:.38px">Z =-0122.982</div>
<svg class="a" style="left:1360px;top:962px" width="100" height="82" viewBox="0 0 100 82" ><g><path d="M47 9q-2-6-7-6" fill="none" stroke="#8a5a3a" stroke-width="1.600"/><ellipse cx="38" cy="3" rx="3.500" ry="2" fill="#8a5a3a"/><circle cx="27" cy="17" r="6" fill="#b8784a"/><circle cx="63" cy="15" r="6" fill="#b8784a"/><circle cx="27" cy="17" r="3" fill="#d8a070"/><circle cx="63" cy="15" r="3" fill="#d8a070"/><ellipse cx="45" cy="34" rx="25.500" ry="24" fill="#b8784a"/><ellipse cx="45.500" cy="38" rx="20.500" ry="17.500" fill="#fde850"/><ellipse cx="31" cy="43" rx="4" ry="2.600" fill="#f8a868"/><ellipse cx="60" cy="43" rx="4" ry="2.600" fill="#f8a868"/><circle cx="36" cy="37.500" r="1.300" fill="#5a3a1a"/><circle cx="57" cy="37.500" r="1.300" fill="#5a3a1a"/><path d="M45 41.500q1.500 1 3 0" stroke="#5a3a1a" stroke-width=".9" fill="none"/><path d="M33 52q12 6 24 0l4 16q-16 6-32 0z" fill="#fde24a"/><path d="M30 60l-8 6M60 60l7 4" stroke="#fde24a" stroke-width="5" stroke-linecap="round"/><path d="M36 72v5M52 72v5" stroke="#f8c030" stroke-width="5" stroke-linecap="round"/><path d="M56 52l-14 18" stroke="#8a5a3a" stroke-width="1.800"/><circle cx="32" cy="65" r="6.500" fill="#b8784a"/><circle cx="27.500" cy="60" r="2.300" fill="#b8784a"/><circle cx="36.500" cy="60" r="2.300" fill="#b8784a"/><ellipse cx="32" cy="67" rx="3" ry="2.300" fill="#e8c8a0"/><circle cx="30" cy="64" r=".7" fill="#3a2a1a"/><circle cx="34" cy="64" r=".7" fill="#3a2a1a"/><ellipse cx="33" cy="74" rx="7" ry="4" fill="#b8784a"/><circle cx="7.500" cy="43" r="8" fill="#a06a58"/><circle cx="14" cy="64.500" r="8" fill="#a06a58"/><path d="M9 62l3-2.300h4l3 2.300-1.800 1.800-1.200-1v6h-4v-6l-1.200 1z" fill="#fff"/></g><text x="3.300" y="46.800" font-size="10.500" font-weight="bold" fill="#fff" font-family="Liberation Sans, sans-serif">C</text><text x="74" y="26.500" font-size="24" font-weight="bold" fill="#f6efe0" stroke="#b8784a" stroke-width="1.400" paint-order="stroke" font-family="Liberation Sans, sans-serif" transform="rotate(6 86 18)">W</text><circle cx="80" cy="17" r="1.600" fill="#c88a5a"/><circle cx="90" cy="20" r="1.600" fill="#c88a5a"/><circle cx="86" cy="13" r="1.300" fill="#c88a5a"/><circle cx="79.500" cy="30.500" r="3.600" fill="#b8784a"/><circle cx="94" cy="29.500" r="3.600" fill="#b8784a"/><ellipse cx="86.500" cy="40" rx="10.500" ry="11" fill="#c08a5c" stroke="#a06a3e" stroke-width=".8"/><text x="80.400" y="46.200" font-size="16" font-weight="bold" fill="#fff" stroke="#fff" stroke-width="1" font-family="Liberation Sans, sans-serif">O</text><text x="74.500" y="71" font-size="25" font-weight="bold" fill="#fde24a" stroke="#9a6a3a" stroke-width="1.500" paint-order="stroke" font-family="Liberation Sans, sans-serif" transform="rotate(-8 86 62)">W</text></svg>
<div class="a" style="left:0;top:1040px;width:1920px;height:8px;background:#1f1f22"></div>
<div class="a" style="left:48px;top:1040px;width:344px;height:8px;background:#f0f0f0"></div>
<div class="a" style="left:589px;top:1040px;width:48px;height:8px;background:#a8602a"></div>
<div class="a" style="left:687px;top:1040px;width:48px;height:8px;background:#4b4b4d"></div>
<div class="t" style="left:1815px;top:1043.5px;color:#fff;font-size:12px">20:22</div>
<div class="a" style="left:1914px;top:1040px;width:1px;height:8px;background:#5a5a5a"></div>
</body></html>
